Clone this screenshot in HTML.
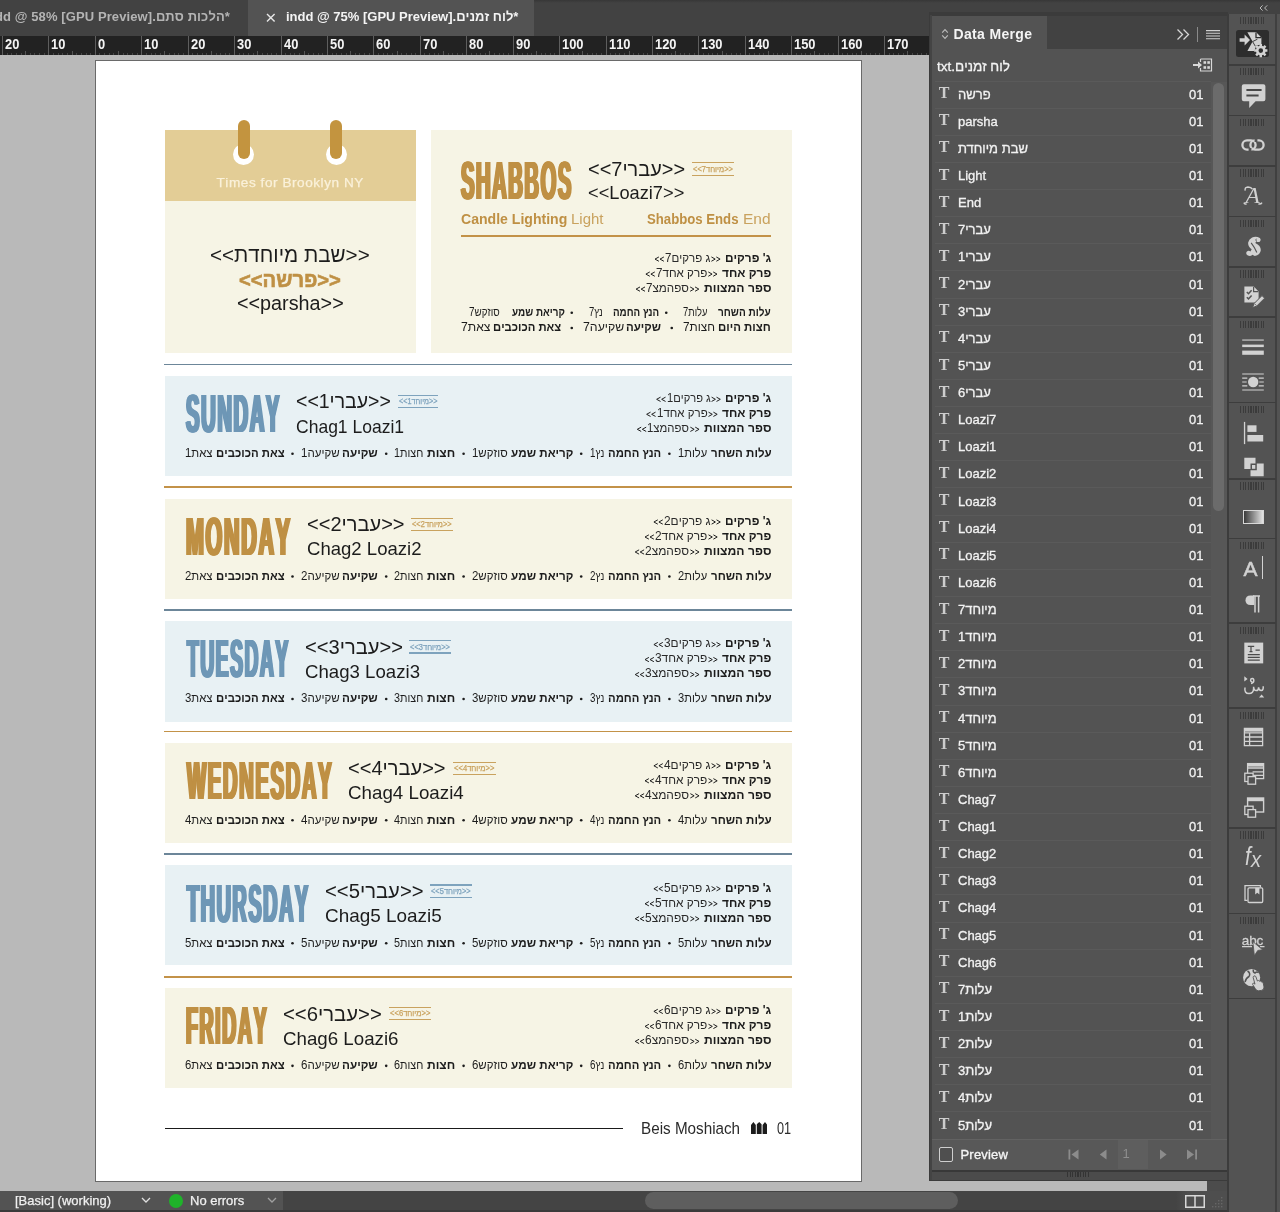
<!DOCTYPE html>
<html lang="en"><head><meta charset="utf-8"><title>InDesign</title>
<style>
*{box-sizing:border-box;margin:0;padding:0}
html,body{width:1280px;height:1212px;overflow:hidden;font-family:"Liberation Sans",sans-serif}
body{position:relative;background:#b9b9b9;font-family:"Liberation Sans",sans-serif;font-size:13px;color:#000}
.a{position:absolute}
.t{position:absolute;white-space:nowrap;line-height:1;font-kerning:none}
/* top tab bar */
#tabbar{left:0;top:0;width:1280px;height:36px;background:#424242}
#tabbar .topline{left:0;top:0;width:1280px;height:3px;background:linear-gradient(#373737,#424242)}
#tab1{left:0;top:0;width:248px;height:36px;background:#424242}
#tab2{left:248px;top:0;width:286px;height:36px;background:#535353}
.tabtxt{font-weight:bold;font-size:13px;top:10px}
/* ruler */
#ruler{left:0;top:36px;width:930px;height:19px;background:#222;overflow:hidden}
#ruler .mj{position:absolute;top:0;width:1px;height:19px;background:#5e5e5e}
#ruler .md{position:absolute;top:15px;width:1px;height:4px;background:#545454}
#ruler .mn{position:absolute;top:17px;width:1px;height:2px;background:#474747}
#ruler .n{position:absolute;top:0.7px;font-size:14px;line-height:1;color:#f4f4f4;font-weight:bold;transform:scaleX(.92);transform-origin:0 0;font-kerning:none}
/* page */
#page{left:95px;top:60px;width:767px;height:1122px;background:#fff;border:1px solid #6a6a6a}
/* status */
#status{left:0;top:1191px;width:1280px;height:21px;background:#444}
/* data merge panel */
#pshadow{left:929px;top:12px;width:299px;height:1169px;background:#3b3b3b}
#panel{left:930px;top:15px;width:297px;height:1165px;background:#535353;overflow:hidden}
#phead{left:0;top:0;width:297px;height:34px;background:#424242}
#ptab{left:0;top:0;width:117px;height:34px;background:#535353}
.row{position:absolute;left:5px;width:276px;height:1px;background:#5a5a5a}
.rT{position:absolute;left:8.8px;font-family:"Liberation Serif",serif;font-size:16px;line-height:1;color:#cdcdcd;font-weight:bold}
.rN{position:absolute;left:28px;font-size:13px;line-height:1;color:#f2f2f2;white-space:nowrap;-webkit-text-stroke:0.3px #f2f2f2}
.rV{position:absolute;left:259px;font-size:13px;line-height:1;color:#f2f2f2;-webkit-text-stroke:0.3px #f2f2f2}

#root{position:absolute;left:0;top:0;width:1280px;height:1212px;will-change:transform}

</style></head>
<body>
<div id="root">
<div class="a" id="tabbar"><div class="a topline"></div></div>
<div class="a" id="tab1"></div><div class="a" id="tab2"></div>
<div class="t tabtxt" style="right:1050px;color:#b4b4b4;letter-spacing:0.1px">InDesign.indd @ 58% [GPU Preview].הלכות סתם*</div>
<svg class="a" style="left:265.5px;top:13px" width="10" height="10" viewBox="0 0 10 10"><path d="M1 1 L8.6 8.6 M8.6 1 L1 8.6" stroke="#e8e8e8" stroke-width="1.4" fill="none"/></svg>
<div class="t tabtxt" style="left:286px;color:#f4f4f4">indd @ 75% [GPU Preview].לוח זמנים*</div>
<div class="a" id="ruler"><i class="mj" style="left:2px"></i><span class="n" style="left:5px">20</span><i class="mn" style="left:7px"></i><i class="mn" style="left:11px"></i><i class="mn" style="left:16px"></i><i class="mn" style="left:21px"></i><i class="md" style="left:25px"></i><i class="mn" style="left:30px"></i><i class="mn" style="left:34px"></i><i class="mn" style="left:39px"></i><i class="mn" style="left:44px"></i><i class="mj" style="left:48px"></i><span class="n" style="left:51px">10</span><i class="mn" style="left:53px"></i><i class="mn" style="left:58px"></i><i class="mn" style="left:62px"></i><i class="mn" style="left:67px"></i><i class="md" style="left:72px"></i><i class="mn" style="left:76px"></i><i class="mn" style="left:81px"></i><i class="mn" style="left:86px"></i><i class="mn" style="left:90px"></i><i class="mj" style="left:95px"></i><span class="n" style="left:98px">0</span><i class="mn" style="left:99px"></i><i class="mn" style="left:104px"></i><i class="mn" style="left:109px"></i><i class="mn" style="left:113px"></i><i class="md" style="left:118px"></i><i class="mn" style="left:123px"></i><i class="mn" style="left:127px"></i><i class="mn" style="left:132px"></i><i class="mn" style="left:137px"></i><i class="mj" style="left:141px"></i><span class="n" style="left:144px">10</span><i class="mn" style="left:146px"></i><i class="mn" style="left:151px"></i><i class="mn" style="left:155px"></i><i class="mn" style="left:160px"></i><i class="md" style="left:164px"></i><i class="mn" style="left:169px"></i><i class="mn" style="left:174px"></i><i class="mn" style="left:178px"></i><i class="mn" style="left:183px"></i><i class="mj" style="left:188px"></i><span class="n" style="left:191px">20</span><i class="mn" style="left:192px"></i><i class="mn" style="left:197px"></i><i class="mn" style="left:202px"></i><i class="mn" style="left:206px"></i><i class="md" style="left:211px"></i><i class="mn" style="left:216px"></i><i class="mn" style="left:220px"></i><i class="mn" style="left:225px"></i><i class="mn" style="left:229px"></i><i class="mj" style="left:234px"></i><span class="n" style="left:237px">30</span><i class="mn" style="left:239px"></i><i class="mn" style="left:243px"></i><i class="mn" style="left:248px"></i><i class="mn" style="left:253px"></i><i class="md" style="left:257px"></i><i class="mn" style="left:262px"></i><i class="mn" style="left:267px"></i><i class="mn" style="left:271px"></i><i class="mn" style="left:276px"></i><i class="mj" style="left:281px"></i><span class="n" style="left:284px">40</span><i class="mn" style="left:285px"></i><i class="mn" style="left:290px"></i><i class="mn" style="left:294px"></i><i class="mn" style="left:299px"></i><i class="md" style="left:304px"></i><i class="mn" style="left:308px"></i><i class="mn" style="left:313px"></i><i class="mn" style="left:318px"></i><i class="mn" style="left:322px"></i><i class="mj" style="left:327px"></i><span class="n" style="left:330px">50</span><i class="mn" style="left:332px"></i><i class="mn" style="left:336px"></i><i class="mn" style="left:341px"></i><i class="mn" style="left:346px"></i><i class="md" style="left:350px"></i><i class="mn" style="left:355px"></i><i class="mn" style="left:359px"></i><i class="mn" style="left:364px"></i><i class="mn" style="left:369px"></i><i class="mj" style="left:373px"></i><span class="n" style="left:376px">60</span><i class="mn" style="left:378px"></i><i class="mn" style="left:383px"></i><i class="mn" style="left:387px"></i><i class="mn" style="left:392px"></i><i class="md" style="left:397px"></i><i class="mn" style="left:401px"></i><i class="mn" style="left:406px"></i><i class="mn" style="left:411px"></i><i class="mn" style="left:415px"></i><i class="mj" style="left:420px"></i><span class="n" style="left:423px">70</span><i class="mn" style="left:424px"></i><i class="mn" style="left:429px"></i><i class="mn" style="left:434px"></i><i class="mn" style="left:438px"></i><i class="md" style="left:443px"></i><i class="mn" style="left:448px"></i><i class="mn" style="left:452px"></i><i class="mn" style="left:457px"></i><i class="mn" style="left:462px"></i><i class="mj" style="left:466px"></i><span class="n" style="left:469px">80</span><i class="mn" style="left:471px"></i><i class="mn" style="left:476px"></i><i class="mn" style="left:480px"></i><i class="mn" style="left:485px"></i><i class="md" style="left:489px"></i><i class="mn" style="left:494px"></i><i class="mn" style="left:499px"></i><i class="mn" style="left:503px"></i><i class="mn" style="left:508px"></i><i class="mj" style="left:513px"></i><span class="n" style="left:516px">90</span><i class="mn" style="left:517px"></i><i class="mn" style="left:522px"></i><i class="mn" style="left:527px"></i><i class="mn" style="left:531px"></i><i class="md" style="left:536px"></i><i class="mn" style="left:541px"></i><i class="mn" style="left:545px"></i><i class="mn" style="left:550px"></i><i class="mn" style="left:554px"></i><i class="mj" style="left:559px"></i><span class="n" style="left:562px">100</span><i class="mn" style="left:564px"></i><i class="mn" style="left:568px"></i><i class="mn" style="left:573px"></i><i class="mn" style="left:578px"></i><i class="md" style="left:582px"></i><i class="mn" style="left:587px"></i><i class="mn" style="left:592px"></i><i class="mn" style="left:596px"></i><i class="mn" style="left:601px"></i><i class="mj" style="left:606px"></i><span class="n" style="left:609px">110</span><i class="mn" style="left:610px"></i><i class="mn" style="left:615px"></i><i class="mn" style="left:619px"></i><i class="mn" style="left:624px"></i><i class="md" style="left:629px"></i><i class="mn" style="left:633px"></i><i class="mn" style="left:638px"></i><i class="mn" style="left:643px"></i><i class="mn" style="left:647px"></i><i class="mj" style="left:652px"></i><span class="n" style="left:655px">120</span><i class="mn" style="left:657px"></i><i class="mn" style="left:661px"></i><i class="mn" style="left:666px"></i><i class="mn" style="left:671px"></i><i class="md" style="left:675px"></i><i class="mn" style="left:680px"></i><i class="mn" style="left:684px"></i><i class="mn" style="left:689px"></i><i class="mn" style="left:694px"></i><i class="mj" style="left:698px"></i><span class="n" style="left:701px">130</span><i class="mn" style="left:703px"></i><i class="mn" style="left:708px"></i><i class="mn" style="left:712px"></i><i class="mn" style="left:717px"></i><i class="md" style="left:722px"></i><i class="mn" style="left:726px"></i><i class="mn" style="left:731px"></i><i class="mn" style="left:736px"></i><i class="mn" style="left:740px"></i><i class="mj" style="left:745px"></i><span class="n" style="left:748px">140</span><i class="mn" style="left:749px"></i><i class="mn" style="left:754px"></i><i class="mn" style="left:759px"></i><i class="mn" style="left:763px"></i><i class="md" style="left:768px"></i><i class="mn" style="left:773px"></i><i class="mn" style="left:777px"></i><i class="mn" style="left:782px"></i><i class="mn" style="left:787px"></i><i class="mj" style="left:791px"></i><span class="n" style="left:794px">150</span><i class="mn" style="left:796px"></i><i class="mn" style="left:801px"></i><i class="mn" style="left:805px"></i><i class="mn" style="left:810px"></i><i class="md" style="left:814px"></i><i class="mn" style="left:819px"></i><i class="mn" style="left:824px"></i><i class="mn" style="left:828px"></i><i class="mn" style="left:833px"></i><i class="mj" style="left:838px"></i><span class="n" style="left:841px">160</span><i class="mn" style="left:842px"></i><i class="mn" style="left:847px"></i><i class="mn" style="left:852px"></i><i class="mn" style="left:856px"></i><i class="md" style="left:861px"></i><i class="mn" style="left:866px"></i><i class="mn" style="left:870px"></i><i class="mn" style="left:875px"></i><i class="mn" style="left:879px"></i><i class="mj" style="left:884px"></i><span class="n" style="left:887px">170</span><i class="mn" style="left:889px"></i><i class="mn" style="left:893px"></i><i class="mn" style="left:898px"></i><i class="mn" style="left:903px"></i><i class="md" style="left:907px"></i><i class="mn" style="left:912px"></i><i class="mn" style="left:917px"></i><i class="mn" style="left:921px"></i><i class="mn" style="left:926px"></i><i class="mj" style="left:931px"></i><span class="n" style="left:934px">180</span></div>
<div class="a" id="page"></div>
<div class="a" id="status"></div>
<div class="a" style="left:0;top:1191px;width:283px;height:21px;background:#535353"></div>
<div class="a" style="left:0;top:1210px;width:1280px;height:2px;background:#3a3a3a"></div>
<div class="t" style="left:15px;top:1194px;font-size:13px;color:#f0f0f0;-webkit-text-stroke:0.25px #f0f0f0">[Basic] (working)</div>
<svg class="a" style="left:141px;top:1197px" width="10" height="7" viewBox="0 0 10 7"><path d="M1 1 L5 5 L9 1" stroke="#e0e0e0" stroke-width="1.3" fill="none"/></svg>
<div class="a" style="left:169px;top:1194px;width:14px;height:14px;border-radius:7px;background:#1fb32a"></div>
<div class="t" style="left:190px;top:1194px;font-size:13px;color:#f0f0f0;-webkit-text-stroke:0.25px #f0f0f0">No errors</div>
<svg class="a" style="left:267px;top:1197px" width="10" height="7" viewBox="0 0 10 7"><path d="M1 1 L5 5 L9 1" stroke="#a0a0a0" stroke-width="1.3" fill="none"/></svg>
<div class="a" style="left:645px;top:1192px;width:313px;height:17px;border-radius:8.5px;background:#5e5e5e"></div>
<svg class="a" style="left:1185px;top:1195px" width="20" height="13" viewBox="0 0 20 13"><rect x="0.75" y="0.75" width="18.5" height="11.5" fill="none" stroke="#d8d8d8" stroke-width="1.5"/><path d="M10 0 V13" stroke="#d8d8d8" stroke-width="1.5"/></svg>
<div class="a" style="left:1176px;top:1191px;width:52px;height:19px;background:linear-gradient(90deg,#444,#4e4e4e 12px)"></div>
<svg class="a" style="left:1185px;top:1195px" width="20" height="13" viewBox="0 0 20 13"><rect x="0.75" y="0.75" width="18.5" height="11.5" fill="none" stroke="#d8d8d8" stroke-width="1.5"/><path d="M10 0 V13" stroke="#d8d8d8" stroke-width="1.5"/></svg>
<svg class="a" style="left:1209px;top:1194px" width="16" height="15" viewBox="0 0 16 15"><g fill="#666"><rect x="12" y="3" width="1.4" height="1.4"/><rect x="9" y="6" width="1.4" height="1.4"/><rect x="12" y="6" width="1.4" height="1.4"/><rect x="6" y="9" width="1.4" height="1.4"/><rect x="9" y="9" width="1.4" height="1.4"/><rect x="12" y="9" width="1.4" height="1.4"/><rect x="3" y="12" width="1.4" height="1.4"/><rect x="6" y="12" width="1.4" height="1.4"/><rect x="9" y="12" width="1.4" height="1.4"/><rect x="12" y="12" width="1.4" height="1.4"/></g></svg>
<div class="a" style="left:164.50px;top:130.00px;width:251.50px;height:223.00px;background:#f6f4e5;"></div>
<div class="a" style="left:164.50px;top:130.00px;width:251.50px;height:70.70px;background:#e3cd96;"></div>
<div class="a" style="left:233.10px;top:143.80px;width:21.2px;height:21.2px;border-radius:50%;background:#fff"></div>
<div class="a" style="left:237.70px;top:120.2px;width:12px;height:39px;border-radius:6px;background:#c3943f"></div>
<div class="a" style="left:325.80px;top:143.80px;width:21.2px;height:21.2px;border-radius:50%;background:#fff"></div>
<div class="a" style="left:330.40px;top:120.2px;width:12px;height:39px;border-radius:6px;background:#c3943f"></div>
<div class="t" style="left:216.50px;top:175.89px;font-size:13.60px;color:#faf1da;letter-spacing:0.546px;-webkit-text-stroke:0.25px #faf1da;">Times for Brooklyn NY</div>
<div class="t" style="left:209.80px;top:243.92px;font-size:21.00px;color:#1c1c1c;transform-origin:0 0;transform:scaleX(0.9822);">&lt;&lt;שבת מיוחדת&gt;&gt;</div>
<div class="t" style="left:238.70px;top:268.52px;font-size:21.00px;color:#bf9044;transform-origin:0 0;transform:scaleX(0.9618);font-weight:bold;-webkit-text-stroke:0.6px #bf9044;">&lt;&lt;פרשה&gt;&gt;</div>
<div class="t" style="left:236.80px;top:292.57px;font-size:20.00px;color:#1c1c1c;transform-origin:0 0;transform:scaleX(0.9891);">&lt;&lt;parsha&gt;&gt;</div>
<div class="a" style="left:430.60px;top:130.00px;width:361.40px;height:223.00px;background:#f6f4e5;"></div>
<div class="t" style="left:460.98px;top:154.01px;font-size:53.97px;font-weight:bold;letter-spacing:4.20px;color:#bf9044;transform-origin:0 0;transform:scaleX(0.3736);text-shadow:1.55px 0 0 #bf9044,-1.55px 0 0 #bf9044,3.10px 0 0 #bf9044,-3.10px 0 0 #bf9044;">SHABBOS</div>
<div class="t" style="left:588.00px;top:158.65px;font-size:20.50px;color:#1c1c1c;transform-origin:0 0;transform:scaleX(0.9724);">&lt;&lt;עברי7&gt;&gt;</div>
<div class="t" style="left:588.00px;top:184.04px;font-size:18.50px;color:#1c1c1c;transform-origin:0 0;transform:scaleX(0.9854);">&lt;&lt;Loazi7&gt;&gt;</div>
<div class="a" style="left:691.70px;top:162.20px;width:42.00px;height:1.10px;background:#c9a25e;"></div>
<div class="a" style="left:691.70px;top:174.70px;width:42.00px;height:1.10px;background:#c9a25e;"></div>
<div class="t" style="left:692.70px;top:164.64px;font-size:8.40px;color:#c9a25e;transform-origin:0 0;transform:scaleX(0.8966);-webkit-text-stroke:0.25px #c9a25e;">&lt;&lt;מיוחד7&gt;&gt;</div>
<div class="t" style="left:460.60px;top:211.95px;font-size:14.00px;color:#bf9044;transform-origin:0 0;transform:scaleX(1.0051);font-weight:bold;">Candle Lighting</div>
<div class="t" style="left:571.00px;top:211.95px;font-size:14.00px;color:#c9a25e;transform-origin:0 0;transform:scaleX(1.0705);">Light</div>
<div class="t" style="left:647.00px;top:211.95px;font-size:14.00px;color:#bf9044;transform-origin:0 0;transform:scaleX(0.9410);font-weight:bold;">Shabbos Ends</div>
<div class="t" style="left:743.00px;top:211.95px;font-size:14.00px;color:#c9a25e;transform-origin:0 0;transform:scaleX(1.1080);">End</div>
<div class="a" style="left:460.60px;top:235.00px;width:310.40px;height:1.70px;background:#c39248;"></div>
<div class="t" style="left:725.00px;top:251.97px;font-size:12.20px;color:#1c1c1c;transform-origin:0 0;transform:scaleX(0.9724);font-weight:bold;direction:rtl;">ג' פרקים</div>
<div class="t" style="left:664.90px;top:251.97px;font-size:12.20px;color:#2a2a2a;transform-origin:0 0;transform:scaleX(0.9451);direction:rtl;">ג פרקים7</div>
<div class="t" style="left:721.90px;top:266.97px;font-size:12.20px;color:#1c1c1c;transform-origin:0 0;transform:scaleX(0.9809);font-weight:bold;direction:rtl;">פרק אחד</div>
<div class="t" style="left:655.80px;top:266.97px;font-size:12.20px;color:#2a2a2a;transform-origin:0 0;transform:scaleX(0.9539);direction:rtl;">פרק אחד7</div>
<div class="t" style="left:703.75px;top:281.97px;font-size:12.20px;color:#1c1c1c;transform-origin:0 0;transform:scaleX(0.9994);font-weight:bold;direction:rtl;">ספר המצוות</div>
<div class="t" style="left:646.00px;top:281.97px;font-size:12.20px;color:#2a2a2a;transform-origin:0 0;transform:scaleX(0.9547);direction:rtl;">ספהמצ7</div>
<div class="t" style="left:718.00px;top:306.17px;font-size:12.20px;color:#1c1c1c;transform-origin:0 0;transform:scaleX(0.8252);font-weight:bold;direction:rtl;">עלות השחר</div>
<div class="t" style="left:683.00px;top:306.17px;font-size:12.20px;color:#1c1c1c;transform-origin:0 0;transform:scaleX(0.7669);direction:rtl;">עלות7</div>
<div class="t" style="left:613.00px;top:306.17px;font-size:12.20px;color:#1c1c1c;transform-origin:0 0;transform:scaleX(0.8043);font-weight:bold;direction:rtl;">הנץ החמה</div>
<div class="t" style="left:588.75px;top:306.17px;font-size:12.20px;color:#1c1c1c;transform-origin:0 0;transform:scaleX(0.7777);direction:rtl;">נץ7</div>
<div class="t" style="left:512.00px;top:306.17px;font-size:12.20px;color:#1c1c1c;transform-origin:0 0;transform:scaleX(0.8107);font-weight:bold;direction:rtl;">קריאת שמע</div>
<div class="t" style="left:469.25px;top:306.17px;font-size:12.20px;color:#1c1c1c;transform-origin:0 0;transform:scaleX(0.8092);direction:rtl;">סוזקש7</div>
<div class="t" style="left:718.00px;top:321.47px;font-size:12.20px;color:#1c1c1c;transform-origin:0 0;transform:scaleX(0.9396);font-weight:bold;direction:rtl;">חצות היום</div>
<div class="t" style="left:683.00px;top:321.47px;font-size:12.20px;color:#1c1c1c;transform-origin:0 0;transform:scaleX(0.9679);direction:rtl;">חצות7</div>
<div class="t" style="left:626.25px;top:321.47px;font-size:12.20px;color:#1c1c1c;transform-origin:0 0;transform:scaleX(0.9392);font-weight:bold;direction:rtl;">שקיעה</div>
<div class="t" style="left:582.50px;top:321.47px;font-size:12.20px;color:#1c1c1c;transform-origin:0 0;transform:scaleX(1.0088);direction:rtl;">שקיעה7</div>
<div class="t" style="left:493.00px;top:321.47px;font-size:12.20px;color:#1c1c1c;transform-origin:0 0;transform:scaleX(0.9273);font-weight:bold;direction:rtl;">צאת הכוכבים</div>
<div class="t" style="left:460.50px;top:321.47px;font-size:12.20px;color:#1c1c1c;transform-origin:0 0;transform:scaleX(0.9992);direction:rtl;">צאת7</div>
<div class="a" style="left:164.30px;top:363.70px;width:627.70px;height:1.80px;background:#6c8699;"></div>
<div class="a" style="left:164.50px;top:375.90px;width:627.50px;height:100.20px;background:#e8f1f4;"></div>
<div class="t" style="left:186.38px;top:387.13px;font-size:53.83px;font-weight:bold;letter-spacing:4.20px;color:#6e97b6;transform-origin:0 0;transform:scaleX(0.3764);text-shadow:1.55px 0 0 #6e97b6,-1.55px 0 0 #6e97b6,3.10px 0 0 #6e97b6,-3.10px 0 0 #6e97b6;">SUNDAY</div>
<div class="t" style="left:296.40px;top:391.45px;font-size:20.50px;color:#1c1c1c;transform-origin:0 0;transform:scaleX(0.9508);">&lt;&lt;עברי1&gt;&gt;</div>
<div class="a" style="left:397.50px;top:395.00px;width:40.50px;height:1.10px;background:#7ea3bd;"></div>
<div class="a" style="left:397.50px;top:407.20px;width:40.50px;height:1.10px;background:#7ea3bd;"></div>
<div class="t" style="left:398.50px;top:397.29px;font-size:8.40px;color:#7ea3bd;transform-origin:0 0;transform:scaleX(0.8630);-webkit-text-stroke:0.25px #7ea3bd;">&lt;&lt;מיוחד1&gt;&gt;</div>
<div class="t" style="left:296.40px;top:416.52px;font-size:19.00px;color:#1c1c1c;transform-origin:0 0;transform:scaleX(0.9219);">Chag1 Loazi1</div>
<div class="t" style="left:725.00px;top:392.17px;font-size:12.20px;color:#1c1c1c;transform-origin:0 0;transform:scaleX(0.9724);font-weight:bold;direction:rtl;">ג' פרקים</div>
<div class="t" style="left:666.55px;top:392.17px;font-size:12.20px;color:#2a2a2a;transform-origin:0 0;transform:scaleX(0.9149);direction:rtl;">ג פרקים1</div>
<div class="t" style="left:721.90px;top:407.17px;font-size:12.20px;color:#1c1c1c;transform-origin:0 0;transform:scaleX(0.9809);font-weight:bold;direction:rtl;">פרק אחד</div>
<div class="t" style="left:656.55px;top:407.17px;font-size:12.20px;color:#2a2a2a;transform-origin:0 0;transform:scaleX(0.9437);direction:rtl;">פרק אחד1</div>
<div class="t" style="left:703.75px;top:422.17px;font-size:12.20px;color:#1c1c1c;transform-origin:0 0;transform:scaleX(0.9994);font-weight:bold;direction:rtl;">ספר המצוות</div>
<div class="t" style="left:647.20px;top:422.17px;font-size:12.20px;color:#2a2a2a;transform-origin:0 0;transform:scaleX(0.9325);direction:rtl;">ספהמצ1</div>
<div class="t" style="left:710.50px;top:447.17px;font-size:12.20px;color:#1c1c1c;transform-origin:0 0;transform:scaleX(0.9494);font-weight:bold;direction:rtl;">עלות השחר</div>
<div class="t" style="left:678.25px;top:447.17px;font-size:12.20px;color:#1c1c1c;transform-origin:0 0;transform:scaleX(0.9156);direction:rtl;">עלות1</div>
<div class="t" style="left:608.00px;top:447.17px;font-size:12.20px;color:#1c1c1c;transform-origin:0 0;transform:scaleX(0.9260);font-weight:bold;direction:rtl;">הנץ החמה</div>
<div class="t" style="left:590.00px;top:447.17px;font-size:12.20px;color:#1c1c1c;transform-origin:0 0;transform:scaleX(0.8060);direction:rtl;">נץ1</div>
<div class="t" style="left:511.25px;top:447.17px;font-size:12.20px;color:#1c1c1c;transform-origin:0 0;transform:scaleX(0.9560);font-weight:bold;direction:rtl;">קריאת שמע</div>
<div class="t" style="left:471.80px;top:447.17px;font-size:12.20px;color:#1c1c1c;transform-origin:0 0;transform:scaleX(0.9395);direction:rtl;">סוזקש1</div>
<div class="t" style="left:427.20px;top:447.17px;font-size:12.20px;color:#1c1c1c;transform-origin:0 0;transform:scaleX(0.9926);font-weight:bold;direction:rtl;">חצות</div>
<div class="t" style="left:394.40px;top:447.17px;font-size:12.20px;color:#1c1c1c;transform-origin:0 0;transform:scaleX(0.8862);direction:rtl;">חצות1</div>
<div class="t" style="left:342.20px;top:447.17px;font-size:12.20px;color:#1c1c1c;transform-origin:0 0;transform:scaleX(0.9606);font-weight:bold;direction:rtl;">שקיעה</div>
<div class="t" style="left:300.70px;top:447.17px;font-size:12.20px;color:#1c1c1c;transform-origin:0 0;transform:scaleX(0.9465);direction:rtl;">שקיעה1</div>
<div class="t" style="left:215.60px;top:447.17px;font-size:12.20px;color:#1c1c1c;transform-origin:0 0;transform:scaleX(0.9334);font-weight:bold;direction:rtl;">צאת הכוכבים</div>
<div class="t" style="left:185.20px;top:447.17px;font-size:12.20px;color:#1c1c1c;transform-origin:0 0;transform:scaleX(0.9349);direction:rtl;">צאת1</div>
<div class="a" style="left:164.30px;top:486.40px;width:627.70px;height:1.80px;background:#c39248;"></div>
<div class="a" style="left:164.50px;top:498.60px;width:627.50px;height:100.20px;background:#f6f4e5;"></div>
<div class="t" style="left:185.60px;top:509.83px;font-size:53.83px;font-weight:bold;letter-spacing:4.20px;color:#bf9044;transform-origin:0 0;transform:scaleX(0.3997);text-shadow:1.55px 0 0 #bf9044,-1.55px 0 0 #bf9044,3.10px 0 0 #bf9044,-3.10px 0 0 #bf9044;">MONDAY</div>
<div class="t" style="left:306.75px;top:514.15px;font-size:20.50px;color:#1c1c1c;transform-origin:0 0;transform:scaleX(0.9774);">&lt;&lt;עברי2&gt;&gt;</div>
<div class="a" style="left:411.25px;top:517.70px;width:41.75px;height:1.10px;background:#c9a25e;"></div>
<div class="a" style="left:411.25px;top:529.90px;width:41.75px;height:1.10px;background:#c9a25e;"></div>
<div class="t" style="left:412.25px;top:519.99px;font-size:8.40px;color:#c9a25e;transform-origin:0 0;transform:scaleX(0.8910);-webkit-text-stroke:0.25px #c9a25e;">&lt;&lt;מיוחד2&gt;&gt;</div>
<div class="t" style="left:306.75px;top:539.22px;font-size:19.00px;color:#1c1c1c;transform-origin:0 0;transform:scaleX(0.9765);">Chag2 Loazi2</div>
<div class="t" style="left:725.00px;top:514.87px;font-size:12.20px;color:#1c1c1c;transform-origin:0 0;transform:scaleX(0.9724);font-weight:bold;direction:rtl;">ג' פרקים</div>
<div class="t" style="left:663.80px;top:514.87px;font-size:12.20px;color:#2a2a2a;transform-origin:0 0;transform:scaleX(0.9722);direction:rtl;">ג פרקים2</div>
<div class="t" style="left:721.90px;top:529.87px;font-size:12.20px;color:#1c1c1c;transform-origin:0 0;transform:scaleX(0.9809);font-weight:bold;direction:rtl;">פרק אחד</div>
<div class="t" style="left:654.90px;top:529.87px;font-size:12.20px;color:#2a2a2a;transform-origin:0 0;transform:scaleX(0.9743);direction:rtl;">פרק אחד2</div>
<div class="t" style="left:703.75px;top:544.87px;font-size:12.20px;color:#1c1c1c;transform-origin:0 0;transform:scaleX(0.9994);font-weight:bold;direction:rtl;">ספר המצוות</div>
<div class="t" style="left:645.10px;top:544.87px;font-size:12.20px;color:#2a2a2a;transform-origin:0 0;transform:scaleX(0.9792);direction:rtl;">ספהמצ2</div>
<div class="t" style="left:710.50px;top:569.87px;font-size:12.20px;color:#1c1c1c;transform-origin:0 0;transform:scaleX(0.9494);font-weight:bold;direction:rtl;">עלות השחר</div>
<div class="t" style="left:678.25px;top:569.87px;font-size:12.20px;color:#1c1c1c;transform-origin:0 0;transform:scaleX(0.9156);direction:rtl;">עלות2</div>
<div class="t" style="left:608.00px;top:569.87px;font-size:12.20px;color:#1c1c1c;transform-origin:0 0;transform:scaleX(0.9260);font-weight:bold;direction:rtl;">הנץ החמה</div>
<div class="t" style="left:590.00px;top:569.87px;font-size:12.20px;color:#1c1c1c;transform-origin:0 0;transform:scaleX(0.8060);direction:rtl;">נץ2</div>
<div class="t" style="left:511.25px;top:569.87px;font-size:12.20px;color:#1c1c1c;transform-origin:0 0;transform:scaleX(0.9560);font-weight:bold;direction:rtl;">קריאת שמע</div>
<div class="t" style="left:471.80px;top:569.87px;font-size:12.20px;color:#1c1c1c;transform-origin:0 0;transform:scaleX(0.9395);direction:rtl;">סוזקש2</div>
<div class="t" style="left:427.20px;top:569.87px;font-size:12.20px;color:#1c1c1c;transform-origin:0 0;transform:scaleX(0.9926);font-weight:bold;direction:rtl;">חצות</div>
<div class="t" style="left:394.40px;top:569.87px;font-size:12.20px;color:#1c1c1c;transform-origin:0 0;transform:scaleX(0.8862);direction:rtl;">חצות2</div>
<div class="t" style="left:342.20px;top:569.87px;font-size:12.20px;color:#1c1c1c;transform-origin:0 0;transform:scaleX(0.9606);font-weight:bold;direction:rtl;">שקיעה</div>
<div class="t" style="left:300.70px;top:569.87px;font-size:12.20px;color:#1c1c1c;transform-origin:0 0;transform:scaleX(0.9465);direction:rtl;">שקיעה2</div>
<div class="t" style="left:215.60px;top:569.87px;font-size:12.20px;color:#1c1c1c;transform-origin:0 0;transform:scaleX(0.9334);font-weight:bold;direction:rtl;">צאת הכוכבים</div>
<div class="t" style="left:185.20px;top:569.87px;font-size:12.20px;color:#1c1c1c;transform-origin:0 0;transform:scaleX(0.9349);direction:rtl;">צאת2</div>
<div class="a" style="left:164.30px;top:609.20px;width:627.70px;height:1.80px;background:#6c8699;"></div>
<div class="a" style="left:164.50px;top:621.40px;width:627.50px;height:100.20px;background:#e8f1f4;"></div>
<div class="t" style="left:186.69px;top:632.38px;font-size:53.83px;font-weight:bold;letter-spacing:4.20px;color:#6e97b6;transform-origin:0 0;transform:scaleX(0.3585);text-shadow:1.55px 0 0 #6e97b6,-1.55px 0 0 #6e97b6,3.10px 0 0 #6e97b6,-3.10px 0 0 #6e97b6;">TUESDAY</div>
<div class="t" style="left:304.50px;top:636.70px;font-size:20.50px;color:#1c1c1c;transform-origin:0 0;transform:scaleX(0.9824);">&lt;&lt;עברי3&gt;&gt;</div>
<div class="a" style="left:408.75px;top:640.25px;width:42.00px;height:1.10px;background:#7ea3bd;"></div>
<div class="a" style="left:408.75px;top:652.45px;width:42.00px;height:1.10px;background:#7ea3bd;"></div>
<div class="t" style="left:409.75px;top:642.54px;font-size:8.40px;color:#7ea3bd;transform-origin:0 0;transform:scaleX(0.8966);-webkit-text-stroke:0.25px #7ea3bd;">&lt;&lt;מיוחד3&gt;&gt;</div>
<div class="t" style="left:304.50px;top:661.77px;font-size:19.00px;color:#1c1c1c;transform-origin:0 0;transform:scaleX(0.9808);">Chag3 Loazi3</div>
<div class="t" style="left:725.00px;top:637.42px;font-size:12.20px;color:#1c1c1c;transform-origin:0 0;transform:scaleX(0.9724);font-weight:bold;direction:rtl;">ג' פרקים</div>
<div class="t" style="left:663.80px;top:637.42px;font-size:12.20px;color:#2a2a2a;transform-origin:0 0;transform:scaleX(0.9722);direction:rtl;">ג פרקים3</div>
<div class="t" style="left:721.90px;top:652.42px;font-size:12.20px;color:#1c1c1c;transform-origin:0 0;transform:scaleX(0.9809);font-weight:bold;direction:rtl;">פרק אחד</div>
<div class="t" style="left:654.90px;top:652.42px;font-size:12.20px;color:#2a2a2a;transform-origin:0 0;transform:scaleX(0.9743);direction:rtl;">פרק אחד3</div>
<div class="t" style="left:703.75px;top:667.42px;font-size:12.20px;color:#1c1c1c;transform-origin:0 0;transform:scaleX(0.9994);font-weight:bold;direction:rtl;">ספר המצוות</div>
<div class="t" style="left:645.10px;top:667.42px;font-size:12.20px;color:#2a2a2a;transform-origin:0 0;transform:scaleX(0.9792);direction:rtl;">ספהמצ3</div>
<div class="t" style="left:710.50px;top:692.42px;font-size:12.20px;color:#1c1c1c;transform-origin:0 0;transform:scaleX(0.9494);font-weight:bold;direction:rtl;">עלות השחר</div>
<div class="t" style="left:678.25px;top:692.42px;font-size:12.20px;color:#1c1c1c;transform-origin:0 0;transform:scaleX(0.9156);direction:rtl;">עלות3</div>
<div class="t" style="left:608.00px;top:692.42px;font-size:12.20px;color:#1c1c1c;transform-origin:0 0;transform:scaleX(0.9260);font-weight:bold;direction:rtl;">הנץ החמה</div>
<div class="t" style="left:590.00px;top:692.42px;font-size:12.20px;color:#1c1c1c;transform-origin:0 0;transform:scaleX(0.8060);direction:rtl;">נץ3</div>
<div class="t" style="left:511.25px;top:692.42px;font-size:12.20px;color:#1c1c1c;transform-origin:0 0;transform:scaleX(0.9560);font-weight:bold;direction:rtl;">קריאת שמע</div>
<div class="t" style="left:471.80px;top:692.42px;font-size:12.20px;color:#1c1c1c;transform-origin:0 0;transform:scaleX(0.9395);direction:rtl;">סוזקש3</div>
<div class="t" style="left:427.20px;top:692.42px;font-size:12.20px;color:#1c1c1c;transform-origin:0 0;transform:scaleX(0.9926);font-weight:bold;direction:rtl;">חצות</div>
<div class="t" style="left:394.40px;top:692.42px;font-size:12.20px;color:#1c1c1c;transform-origin:0 0;transform:scaleX(0.8862);direction:rtl;">חצות3</div>
<div class="t" style="left:342.20px;top:692.42px;font-size:12.20px;color:#1c1c1c;transform-origin:0 0;transform:scaleX(0.9606);font-weight:bold;direction:rtl;">שקיעה</div>
<div class="t" style="left:300.70px;top:692.42px;font-size:12.20px;color:#1c1c1c;transform-origin:0 0;transform:scaleX(0.9465);direction:rtl;">שקיעה3</div>
<div class="t" style="left:215.60px;top:692.42px;font-size:12.20px;color:#1c1c1c;transform-origin:0 0;transform:scaleX(0.9334);font-weight:bold;direction:rtl;">צאת הכוכבים</div>
<div class="t" style="left:185.20px;top:692.42px;font-size:12.20px;color:#1c1c1c;transform-origin:0 0;transform:scaleX(0.9349);direction:rtl;">צאת3</div>
<div class="a" style="left:164.30px;top:730.70px;width:627.70px;height:1.80px;background:#c39248;"></div>
<div class="a" style="left:164.50px;top:742.90px;width:627.50px;height:100.20px;background:#f6f4e5;"></div>
<div class="t" style="left:186.95px;top:753.63px;font-size:53.83px;font-weight:bold;letter-spacing:4.20px;color:#bf9044;transform-origin:0 0;transform:scaleX(0.3773);text-shadow:1.55px 0 0 #bf9044,-1.55px 0 0 #bf9044,3.10px 0 0 #bf9044,-3.10px 0 0 #bf9044;">WEDNESDAY</div>
<div class="t" style="left:348.00px;top:757.95px;font-size:20.50px;color:#1c1c1c;transform-origin:0 0;transform:scaleX(0.9774);">&lt;&lt;עברי4&gt;&gt;</div>
<div class="a" style="left:453.00px;top:761.50px;width:42.50px;height:1.10px;background:#c9a25e;"></div>
<div class="a" style="left:453.00px;top:773.70px;width:42.50px;height:1.10px;background:#c9a25e;"></div>
<div class="t" style="left:454.00px;top:763.79px;font-size:8.40px;color:#c9a25e;transform-origin:0 0;transform:scaleX(0.9078);-webkit-text-stroke:0.25px #c9a25e;">&lt;&lt;מיוחד4&gt;&gt;</div>
<div class="t" style="left:348.00px;top:783.02px;font-size:19.00px;color:#1c1c1c;transform-origin:0 0;transform:scaleX(0.9872);">Chag4 Loazi4</div>
<div class="t" style="left:725.00px;top:758.67px;font-size:12.20px;color:#1c1c1c;transform-origin:0 0;transform:scaleX(0.9724);font-weight:bold;direction:rtl;">ג' פרקים</div>
<div class="t" style="left:663.80px;top:758.67px;font-size:12.20px;color:#2a2a2a;transform-origin:0 0;transform:scaleX(0.9722);direction:rtl;">ג פרקים4</div>
<div class="t" style="left:721.90px;top:773.67px;font-size:12.20px;color:#1c1c1c;transform-origin:0 0;transform:scaleX(0.9809);font-weight:bold;direction:rtl;">פרק אחד</div>
<div class="t" style="left:654.90px;top:773.67px;font-size:12.20px;color:#2a2a2a;transform-origin:0 0;transform:scaleX(0.9743);direction:rtl;">פרק אחד4</div>
<div class="t" style="left:703.75px;top:788.67px;font-size:12.20px;color:#1c1c1c;transform-origin:0 0;transform:scaleX(0.9994);font-weight:bold;direction:rtl;">ספר המצוות</div>
<div class="t" style="left:645.10px;top:788.67px;font-size:12.20px;color:#2a2a2a;transform-origin:0 0;transform:scaleX(0.9792);direction:rtl;">ספהמצ4</div>
<div class="t" style="left:710.50px;top:813.67px;font-size:12.20px;color:#1c1c1c;transform-origin:0 0;transform:scaleX(0.9494);font-weight:bold;direction:rtl;">עלות השחר</div>
<div class="t" style="left:678.25px;top:813.67px;font-size:12.20px;color:#1c1c1c;transform-origin:0 0;transform:scaleX(0.9156);direction:rtl;">עלות4</div>
<div class="t" style="left:608.00px;top:813.67px;font-size:12.20px;color:#1c1c1c;transform-origin:0 0;transform:scaleX(0.9260);font-weight:bold;direction:rtl;">הנץ החמה</div>
<div class="t" style="left:590.00px;top:813.67px;font-size:12.20px;color:#1c1c1c;transform-origin:0 0;transform:scaleX(0.8060);direction:rtl;">נץ4</div>
<div class="t" style="left:511.25px;top:813.67px;font-size:12.20px;color:#1c1c1c;transform-origin:0 0;transform:scaleX(0.9560);font-weight:bold;direction:rtl;">קריאת שמע</div>
<div class="t" style="left:471.80px;top:813.67px;font-size:12.20px;color:#1c1c1c;transform-origin:0 0;transform:scaleX(0.9395);direction:rtl;">סוזקש4</div>
<div class="t" style="left:427.20px;top:813.67px;font-size:12.20px;color:#1c1c1c;transform-origin:0 0;transform:scaleX(0.9926);font-weight:bold;direction:rtl;">חצות</div>
<div class="t" style="left:394.40px;top:813.67px;font-size:12.20px;color:#1c1c1c;transform-origin:0 0;transform:scaleX(0.8862);direction:rtl;">חצות4</div>
<div class="t" style="left:342.20px;top:813.67px;font-size:12.20px;color:#1c1c1c;transform-origin:0 0;transform:scaleX(0.9606);font-weight:bold;direction:rtl;">שקיעה</div>
<div class="t" style="left:300.70px;top:813.67px;font-size:12.20px;color:#1c1c1c;transform-origin:0 0;transform:scaleX(0.9465);direction:rtl;">שקיעה4</div>
<div class="t" style="left:215.60px;top:813.67px;font-size:12.20px;color:#1c1c1c;transform-origin:0 0;transform:scaleX(0.9334);font-weight:bold;direction:rtl;">צאת הכוכבים</div>
<div class="t" style="left:185.20px;top:813.67px;font-size:12.20px;color:#1c1c1c;transform-origin:0 0;transform:scaleX(0.9349);direction:rtl;">צאת4</div>
<div class="a" style="left:164.30px;top:852.90px;width:627.70px;height:1.80px;background:#6c8699;"></div>
<div class="a" style="left:164.50px;top:865.10px;width:627.50px;height:100.20px;background:#e8f1f4;"></div>
<div class="t" style="left:186.72px;top:876.58px;font-size:53.83px;font-weight:bold;letter-spacing:4.20px;color:#6e97b6;transform-origin:0 0;transform:scaleX(0.3690);text-shadow:1.55px 0 0 #6e97b6,-1.55px 0 0 #6e97b6,3.10px 0 0 #6e97b6,-3.10px 0 0 #6e97b6;">THURSDAY</div>
<div class="t" style="left:324.50px;top:880.90px;font-size:20.50px;color:#1c1c1c;transform-origin:0 0;transform:scaleX(0.9874);">&lt;&lt;עברי5&gt;&gt;</div>
<div class="a" style="left:430.00px;top:884.45px;width:41.75px;height:1.10px;background:#7ea3bd;"></div>
<div class="a" style="left:430.00px;top:896.65px;width:41.75px;height:1.10px;background:#7ea3bd;"></div>
<div class="t" style="left:431.00px;top:886.74px;font-size:8.40px;color:#7ea3bd;transform-origin:0 0;transform:scaleX(0.8910);-webkit-text-stroke:0.25px #7ea3bd;">&lt;&lt;מיוחד5&gt;&gt;</div>
<div class="t" style="left:324.50px;top:905.97px;font-size:19.00px;color:#1c1c1c;transform-origin:0 0;transform:scaleX(0.9957);">Chag5 Loazi5</div>
<div class="t" style="left:725.00px;top:881.62px;font-size:12.20px;color:#1c1c1c;transform-origin:0 0;transform:scaleX(0.9724);font-weight:bold;direction:rtl;">ג' פרקים</div>
<div class="t" style="left:663.80px;top:881.62px;font-size:12.20px;color:#2a2a2a;transform-origin:0 0;transform:scaleX(0.9722);direction:rtl;">ג פרקים5</div>
<div class="t" style="left:721.90px;top:896.62px;font-size:12.20px;color:#1c1c1c;transform-origin:0 0;transform:scaleX(0.9809);font-weight:bold;direction:rtl;">פרק אחד</div>
<div class="t" style="left:654.90px;top:896.62px;font-size:12.20px;color:#2a2a2a;transform-origin:0 0;transform:scaleX(0.9743);direction:rtl;">פרק אחד5</div>
<div class="t" style="left:703.75px;top:911.62px;font-size:12.20px;color:#1c1c1c;transform-origin:0 0;transform:scaleX(0.9994);font-weight:bold;direction:rtl;">ספר המצוות</div>
<div class="t" style="left:645.10px;top:911.62px;font-size:12.20px;color:#2a2a2a;transform-origin:0 0;transform:scaleX(0.9792);direction:rtl;">ספהמצ5</div>
<div class="t" style="left:710.50px;top:936.62px;font-size:12.20px;color:#1c1c1c;transform-origin:0 0;transform:scaleX(0.9494);font-weight:bold;direction:rtl;">עלות השחר</div>
<div class="t" style="left:678.25px;top:936.62px;font-size:12.20px;color:#1c1c1c;transform-origin:0 0;transform:scaleX(0.9156);direction:rtl;">עלות5</div>
<div class="t" style="left:608.00px;top:936.62px;font-size:12.20px;color:#1c1c1c;transform-origin:0 0;transform:scaleX(0.9260);font-weight:bold;direction:rtl;">הנץ החמה</div>
<div class="t" style="left:590.00px;top:936.62px;font-size:12.20px;color:#1c1c1c;transform-origin:0 0;transform:scaleX(0.8060);direction:rtl;">נץ5</div>
<div class="t" style="left:511.25px;top:936.62px;font-size:12.20px;color:#1c1c1c;transform-origin:0 0;transform:scaleX(0.9560);font-weight:bold;direction:rtl;">קריאת שמע</div>
<div class="t" style="left:471.80px;top:936.62px;font-size:12.20px;color:#1c1c1c;transform-origin:0 0;transform:scaleX(0.9395);direction:rtl;">סוזקש5</div>
<div class="t" style="left:427.20px;top:936.62px;font-size:12.20px;color:#1c1c1c;transform-origin:0 0;transform:scaleX(0.9926);font-weight:bold;direction:rtl;">חצות</div>
<div class="t" style="left:394.40px;top:936.62px;font-size:12.20px;color:#1c1c1c;transform-origin:0 0;transform:scaleX(0.8862);direction:rtl;">חצות5</div>
<div class="t" style="left:342.20px;top:936.62px;font-size:12.20px;color:#1c1c1c;transform-origin:0 0;transform:scaleX(0.9606);font-weight:bold;direction:rtl;">שקיעה</div>
<div class="t" style="left:300.70px;top:936.62px;font-size:12.20px;color:#1c1c1c;transform-origin:0 0;transform:scaleX(0.9465);direction:rtl;">שקיעה5</div>
<div class="t" style="left:215.60px;top:936.62px;font-size:12.20px;color:#1c1c1c;transform-origin:0 0;transform:scaleX(0.9334);font-weight:bold;direction:rtl;">צאת הכוכבים</div>
<div class="t" style="left:185.20px;top:936.62px;font-size:12.20px;color:#1c1c1c;transform-origin:0 0;transform:scaleX(0.9349);direction:rtl;">צאת5</div>
<div class="a" style="left:164.30px;top:976.00px;width:627.70px;height:1.80px;background:#c39248;"></div>
<div class="a" style="left:164.50px;top:988.20px;width:627.50px;height:100.20px;background:#f6f4e5;"></div>
<div class="t" style="left:185.62px;top:999.23px;font-size:53.83px;font-weight:bold;letter-spacing:4.20px;color:#bf9044;transform-origin:0 0;transform:scaleX(0.3640);text-shadow:1.55px 0 0 #bf9044,-1.55px 0 0 #bf9044,3.10px 0 0 #bf9044,-3.10px 0 0 #bf9044;">FRIDAY</div>
<div class="t" style="left:283.25px;top:1003.55px;font-size:20.50px;color:#1c1c1c;transform-origin:0 0;transform:scaleX(0.9899);">&lt;&lt;עברי6&gt;&gt;</div>
<div class="a" style="left:388.75px;top:1007.10px;width:42.50px;height:1.10px;background:#c9a25e;"></div>
<div class="a" style="left:388.75px;top:1019.30px;width:42.50px;height:1.10px;background:#c9a25e;"></div>
<div class="t" style="left:389.75px;top:1009.39px;font-size:8.40px;color:#c9a25e;transform-origin:0 0;transform:scaleX(0.9078);-webkit-text-stroke:0.25px #c9a25e;">&lt;&lt;מיוחד6&gt;&gt;</div>
<div class="t" style="left:283.25px;top:1028.62px;font-size:19.00px;color:#1c1c1c;transform-origin:0 0;transform:scaleX(0.9850);">Chag6 Loazi6</div>
<div class="t" style="left:725.00px;top:1004.27px;font-size:12.20px;color:#1c1c1c;transform-origin:0 0;transform:scaleX(0.9724);font-weight:bold;direction:rtl;">ג' פרקים</div>
<div class="t" style="left:663.80px;top:1004.27px;font-size:12.20px;color:#2a2a2a;transform-origin:0 0;transform:scaleX(0.9722);direction:rtl;">ג פרקים6</div>
<div class="t" style="left:721.90px;top:1019.27px;font-size:12.20px;color:#1c1c1c;transform-origin:0 0;transform:scaleX(0.9809);font-weight:bold;direction:rtl;">פרק אחד</div>
<div class="t" style="left:654.90px;top:1019.27px;font-size:12.20px;color:#2a2a2a;transform-origin:0 0;transform:scaleX(0.9743);direction:rtl;">פרק אחד6</div>
<div class="t" style="left:703.75px;top:1034.27px;font-size:12.20px;color:#1c1c1c;transform-origin:0 0;transform:scaleX(0.9994);font-weight:bold;direction:rtl;">ספר המצוות</div>
<div class="t" style="left:645.10px;top:1034.27px;font-size:12.20px;color:#2a2a2a;transform-origin:0 0;transform:scaleX(0.9792);direction:rtl;">ספהמצ6</div>
<div class="t" style="left:710.50px;top:1059.27px;font-size:12.20px;color:#1c1c1c;transform-origin:0 0;transform:scaleX(0.9494);font-weight:bold;direction:rtl;">עלות השחר</div>
<div class="t" style="left:678.25px;top:1059.27px;font-size:12.20px;color:#1c1c1c;transform-origin:0 0;transform:scaleX(0.9156);direction:rtl;">עלות6</div>
<div class="t" style="left:608.00px;top:1059.27px;font-size:12.20px;color:#1c1c1c;transform-origin:0 0;transform:scaleX(0.9260);font-weight:bold;direction:rtl;">הנץ החמה</div>
<div class="t" style="left:590.00px;top:1059.27px;font-size:12.20px;color:#1c1c1c;transform-origin:0 0;transform:scaleX(0.8060);direction:rtl;">נץ6</div>
<div class="t" style="left:511.25px;top:1059.27px;font-size:12.20px;color:#1c1c1c;transform-origin:0 0;transform:scaleX(0.9560);font-weight:bold;direction:rtl;">קריאת שמע</div>
<div class="t" style="left:471.80px;top:1059.27px;font-size:12.20px;color:#1c1c1c;transform-origin:0 0;transform:scaleX(0.9395);direction:rtl;">סוזקש6</div>
<div class="t" style="left:427.20px;top:1059.27px;font-size:12.20px;color:#1c1c1c;transform-origin:0 0;transform:scaleX(0.9926);font-weight:bold;direction:rtl;">חצות</div>
<div class="t" style="left:394.40px;top:1059.27px;font-size:12.20px;color:#1c1c1c;transform-origin:0 0;transform:scaleX(0.8862);direction:rtl;">חצות6</div>
<div class="t" style="left:342.20px;top:1059.27px;font-size:12.20px;color:#1c1c1c;transform-origin:0 0;transform:scaleX(0.9606);font-weight:bold;direction:rtl;">שקיעה</div>
<div class="t" style="left:300.70px;top:1059.27px;font-size:12.20px;color:#1c1c1c;transform-origin:0 0;transform:scaleX(0.9465);direction:rtl;">שקיעה6</div>
<div class="t" style="left:215.60px;top:1059.27px;font-size:12.20px;color:#1c1c1c;transform-origin:0 0;transform:scaleX(0.9334);font-weight:bold;direction:rtl;">צאת הכוכבים</div>
<div class="t" style="left:185.20px;top:1059.27px;font-size:12.20px;color:#1c1c1c;transform-origin:0 0;transform:scaleX(0.9349);direction:rtl;">צאת6</div>
<div class="a" style="left:164.50px;top:1127.70px;width:458.60px;height:1.40px;background:#1a1a1a;"></div>
<div class="t" style="left:640.60px;top:1119.60px;font-size:16.30px;color:#2b2b2b;transform-origin:0 0;transform:scaleX(0.9359);">Beis Moshiach</div>
<div class="t" style="left:776.90px;top:1119.60px;font-size:16.30px;color:#2b2b2b;transform-origin:0 0;transform:scaleX(0.7777);">01</div>
<svg class="a" style="left:750.8px;top:1122px" width="16.4" height="12" viewBox="0 0 16.4 12"><path d="M0 12 V3 L2.4 0 L4.8 3 V12 Z M5.8 12 V2.2 L8.2 0 L10.6 2.2 V12 Z M11.6 12 V3 L14 0 L16.4 3 V12 Z" fill="#1c1c1c"/></svg>
<svg class="a" style="left:0;top:0" width="1280" height="1212" viewBox="0 0 1280 1212"><path d="M658.90 256.95 L655.00 259.10 L658.90 261.25" stroke="#1e1e1e" stroke-width="1.00" fill="none"/><path d="M663.90 256.95 L660.00 259.10 L663.90 261.25" stroke="#1e1e1e" stroke-width="1.00" fill="none"/><path d="M711.40 256.95 L715.20 259.10 L711.40 261.25" stroke="#1e1e1e" stroke-width="1.00" fill="none"/><path d="M716.30 256.95 L720.10 259.10 L716.30 261.25" stroke="#1e1e1e" stroke-width="1.00" fill="none"/><path d="M649.80 271.95 L645.90 274.10 L649.80 276.25" stroke="#1e1e1e" stroke-width="1.00" fill="none"/><path d="M654.80 271.95 L650.90 274.10 L654.80 276.25" stroke="#1e1e1e" stroke-width="1.00" fill="none"/><path d="M708.30 271.95 L712.10 274.10 L708.30 276.25" stroke="#1e1e1e" stroke-width="1.00" fill="none"/><path d="M713.20 271.95 L717.00 274.10 L713.20 276.25" stroke="#1e1e1e" stroke-width="1.00" fill="none"/><path d="M640.00 286.95 L636.10 289.10 L640.00 291.25" stroke="#1e1e1e" stroke-width="1.00" fill="none"/><path d="M645.00 286.95 L641.10 289.10 L645.00 291.25" stroke="#1e1e1e" stroke-width="1.00" fill="none"/><path d="M690.15 286.95 L693.95 289.10 L690.15 291.25" stroke="#1e1e1e" stroke-width="1.00" fill="none"/><path d="M695.05 286.95 L698.85 289.10 L695.05 291.25" stroke="#1e1e1e" stroke-width="1.00" fill="none"/><circle cx="666.25" cy="312.75" r="1.30" fill="#1c1c1c"/><circle cx="571.75" cy="312.75" r="1.30" fill="#1c1c1c"/><circle cx="671.75" cy="328.05" r="1.30" fill="#1c1c1c"/><circle cx="571.75" cy="328.05" r="1.30" fill="#1c1c1c"/><path d="M660.55 397.15 L656.65 399.30 L660.55 401.45" stroke="#1e1e1e" stroke-width="1.00" fill="none"/><path d="M665.55 397.15 L661.65 399.30 L665.55 401.45" stroke="#1e1e1e" stroke-width="1.00" fill="none"/><path d="M711.60 397.15 L715.40 399.30 L711.60 401.45" stroke="#1e1e1e" stroke-width="1.00" fill="none"/><path d="M716.50 397.15 L720.30 399.30 L716.50 401.45" stroke="#1e1e1e" stroke-width="1.00" fill="none"/><path d="M650.55 412.15 L646.65 414.30 L650.55 416.45" stroke="#1e1e1e" stroke-width="1.00" fill="none"/><path d="M655.55 412.15 L651.65 414.30 L655.55 416.45" stroke="#1e1e1e" stroke-width="1.00" fill="none"/><path d="M708.50 412.15 L712.30 414.30 L708.50 416.45" stroke="#1e1e1e" stroke-width="1.00" fill="none"/><path d="M713.40 412.15 L717.20 414.30 L713.40 416.45" stroke="#1e1e1e" stroke-width="1.00" fill="none"/><path d="M641.20 427.15 L637.30 429.30 L641.20 431.45" stroke="#1e1e1e" stroke-width="1.00" fill="none"/><path d="M646.20 427.15 L642.30 429.30 L646.20 431.45" stroke="#1e1e1e" stroke-width="1.00" fill="none"/><path d="M690.35 427.15 L694.15 429.30 L690.35 431.45" stroke="#1e1e1e" stroke-width="1.00" fill="none"/><path d="M695.25 427.15 L699.05 429.30 L695.25 431.45" stroke="#1e1e1e" stroke-width="1.00" fill="none"/><circle cx="669.40" cy="453.75" r="1.30" fill="#1c1c1c"/><circle cx="581.20" cy="453.75" r="1.30" fill="#1c1c1c"/><circle cx="463.60" cy="453.75" r="1.30" fill="#1c1c1c"/><circle cx="386.20" cy="453.75" r="1.30" fill="#1c1c1c"/><circle cx="292.50" cy="453.75" r="1.30" fill="#1c1c1c"/><path d="M657.80 519.85 L653.90 522.00 L657.80 524.15" stroke="#1e1e1e" stroke-width="1.00" fill="none"/><path d="M662.80 519.85 L658.90 522.00 L662.80 524.15" stroke="#1e1e1e" stroke-width="1.00" fill="none"/><path d="M711.60 519.85 L715.40 522.00 L711.60 524.15" stroke="#1e1e1e" stroke-width="1.00" fill="none"/><path d="M716.50 519.85 L720.30 522.00 L716.50 524.15" stroke="#1e1e1e" stroke-width="1.00" fill="none"/><path d="M648.90 534.85 L645.00 537.00 L648.90 539.15" stroke="#1e1e1e" stroke-width="1.00" fill="none"/><path d="M653.90 534.85 L650.00 537.00 L653.90 539.15" stroke="#1e1e1e" stroke-width="1.00" fill="none"/><path d="M708.50 534.85 L712.30 537.00 L708.50 539.15" stroke="#1e1e1e" stroke-width="1.00" fill="none"/><path d="M713.40 534.85 L717.20 537.00 L713.40 539.15" stroke="#1e1e1e" stroke-width="1.00" fill="none"/><path d="M639.10 549.85 L635.20 552.00 L639.10 554.15" stroke="#1e1e1e" stroke-width="1.00" fill="none"/><path d="M644.10 549.85 L640.20 552.00 L644.10 554.15" stroke="#1e1e1e" stroke-width="1.00" fill="none"/><path d="M690.35 549.85 L694.15 552.00 L690.35 554.15" stroke="#1e1e1e" stroke-width="1.00" fill="none"/><path d="M695.25 549.85 L699.05 552.00 L695.25 554.15" stroke="#1e1e1e" stroke-width="1.00" fill="none"/><circle cx="669.40" cy="576.45" r="1.30" fill="#1c1c1c"/><circle cx="581.20" cy="576.45" r="1.30" fill="#1c1c1c"/><circle cx="463.60" cy="576.45" r="1.30" fill="#1c1c1c"/><circle cx="386.20" cy="576.45" r="1.30" fill="#1c1c1c"/><circle cx="292.50" cy="576.45" r="1.30" fill="#1c1c1c"/><path d="M657.80 642.40 L653.90 644.55 L657.80 646.70" stroke="#1e1e1e" stroke-width="1.00" fill="none"/><path d="M662.80 642.40 L658.90 644.55 L662.80 646.70" stroke="#1e1e1e" stroke-width="1.00" fill="none"/><path d="M711.60 642.40 L715.40 644.55 L711.60 646.70" stroke="#1e1e1e" stroke-width="1.00" fill="none"/><path d="M716.50 642.40 L720.30 644.55 L716.50 646.70" stroke="#1e1e1e" stroke-width="1.00" fill="none"/><path d="M648.90 657.40 L645.00 659.55 L648.90 661.70" stroke="#1e1e1e" stroke-width="1.00" fill="none"/><path d="M653.90 657.40 L650.00 659.55 L653.90 661.70" stroke="#1e1e1e" stroke-width="1.00" fill="none"/><path d="M708.50 657.40 L712.30 659.55 L708.50 661.70" stroke="#1e1e1e" stroke-width="1.00" fill="none"/><path d="M713.40 657.40 L717.20 659.55 L713.40 661.70" stroke="#1e1e1e" stroke-width="1.00" fill="none"/><path d="M639.10 672.40 L635.20 674.55 L639.10 676.70" stroke="#1e1e1e" stroke-width="1.00" fill="none"/><path d="M644.10 672.40 L640.20 674.55 L644.10 676.70" stroke="#1e1e1e" stroke-width="1.00" fill="none"/><path d="M690.35 672.40 L694.15 674.55 L690.35 676.70" stroke="#1e1e1e" stroke-width="1.00" fill="none"/><path d="M695.25 672.40 L699.05 674.55 L695.25 676.70" stroke="#1e1e1e" stroke-width="1.00" fill="none"/><circle cx="669.40" cy="699.00" r="1.30" fill="#1c1c1c"/><circle cx="581.20" cy="699.00" r="1.30" fill="#1c1c1c"/><circle cx="463.60" cy="699.00" r="1.30" fill="#1c1c1c"/><circle cx="386.20" cy="699.00" r="1.30" fill="#1c1c1c"/><circle cx="292.50" cy="699.00" r="1.30" fill="#1c1c1c"/><path d="M657.80 763.65 L653.90 765.80 L657.80 767.95" stroke="#1e1e1e" stroke-width="1.00" fill="none"/><path d="M662.80 763.65 L658.90 765.80 L662.80 767.95" stroke="#1e1e1e" stroke-width="1.00" fill="none"/><path d="M711.60 763.65 L715.40 765.80 L711.60 767.95" stroke="#1e1e1e" stroke-width="1.00" fill="none"/><path d="M716.50 763.65 L720.30 765.80 L716.50 767.95" stroke="#1e1e1e" stroke-width="1.00" fill="none"/><path d="M648.90 778.65 L645.00 780.80 L648.90 782.95" stroke="#1e1e1e" stroke-width="1.00" fill="none"/><path d="M653.90 778.65 L650.00 780.80 L653.90 782.95" stroke="#1e1e1e" stroke-width="1.00" fill="none"/><path d="M708.50 778.65 L712.30 780.80 L708.50 782.95" stroke="#1e1e1e" stroke-width="1.00" fill="none"/><path d="M713.40 778.65 L717.20 780.80 L713.40 782.95" stroke="#1e1e1e" stroke-width="1.00" fill="none"/><path d="M639.10 793.65 L635.20 795.80 L639.10 797.95" stroke="#1e1e1e" stroke-width="1.00" fill="none"/><path d="M644.10 793.65 L640.20 795.80 L644.10 797.95" stroke="#1e1e1e" stroke-width="1.00" fill="none"/><path d="M690.35 793.65 L694.15 795.80 L690.35 797.95" stroke="#1e1e1e" stroke-width="1.00" fill="none"/><path d="M695.25 793.65 L699.05 795.80 L695.25 797.95" stroke="#1e1e1e" stroke-width="1.00" fill="none"/><circle cx="669.40" cy="820.25" r="1.30" fill="#1c1c1c"/><circle cx="581.20" cy="820.25" r="1.30" fill="#1c1c1c"/><circle cx="463.60" cy="820.25" r="1.30" fill="#1c1c1c"/><circle cx="386.20" cy="820.25" r="1.30" fill="#1c1c1c"/><circle cx="292.50" cy="820.25" r="1.30" fill="#1c1c1c"/><path d="M657.80 886.60 L653.90 888.75 L657.80 890.90" stroke="#1e1e1e" stroke-width="1.00" fill="none"/><path d="M662.80 886.60 L658.90 888.75 L662.80 890.90" stroke="#1e1e1e" stroke-width="1.00" fill="none"/><path d="M711.60 886.60 L715.40 888.75 L711.60 890.90" stroke="#1e1e1e" stroke-width="1.00" fill="none"/><path d="M716.50 886.60 L720.30 888.75 L716.50 890.90" stroke="#1e1e1e" stroke-width="1.00" fill="none"/><path d="M648.90 901.60 L645.00 903.75 L648.90 905.90" stroke="#1e1e1e" stroke-width="1.00" fill="none"/><path d="M653.90 901.60 L650.00 903.75 L653.90 905.90" stroke="#1e1e1e" stroke-width="1.00" fill="none"/><path d="M708.50 901.60 L712.30 903.75 L708.50 905.90" stroke="#1e1e1e" stroke-width="1.00" fill="none"/><path d="M713.40 901.60 L717.20 903.75 L713.40 905.90" stroke="#1e1e1e" stroke-width="1.00" fill="none"/><path d="M639.10 916.60 L635.20 918.75 L639.10 920.90" stroke="#1e1e1e" stroke-width="1.00" fill="none"/><path d="M644.10 916.60 L640.20 918.75 L644.10 920.90" stroke="#1e1e1e" stroke-width="1.00" fill="none"/><path d="M690.35 916.60 L694.15 918.75 L690.35 920.90" stroke="#1e1e1e" stroke-width="1.00" fill="none"/><path d="M695.25 916.60 L699.05 918.75 L695.25 920.90" stroke="#1e1e1e" stroke-width="1.00" fill="none"/><circle cx="669.40" cy="943.20" r="1.30" fill="#1c1c1c"/><circle cx="581.20" cy="943.20" r="1.30" fill="#1c1c1c"/><circle cx="463.60" cy="943.20" r="1.30" fill="#1c1c1c"/><circle cx="386.20" cy="943.20" r="1.30" fill="#1c1c1c"/><circle cx="292.50" cy="943.20" r="1.30" fill="#1c1c1c"/><path d="M657.80 1009.25 L653.90 1011.40 L657.80 1013.55" stroke="#1e1e1e" stroke-width="1.00" fill="none"/><path d="M662.80 1009.25 L658.90 1011.40 L662.80 1013.55" stroke="#1e1e1e" stroke-width="1.00" fill="none"/><path d="M711.60 1009.25 L715.40 1011.40 L711.60 1013.55" stroke="#1e1e1e" stroke-width="1.00" fill="none"/><path d="M716.50 1009.25 L720.30 1011.40 L716.50 1013.55" stroke="#1e1e1e" stroke-width="1.00" fill="none"/><path d="M648.90 1024.25 L645.00 1026.40 L648.90 1028.55" stroke="#1e1e1e" stroke-width="1.00" fill="none"/><path d="M653.90 1024.25 L650.00 1026.40 L653.90 1028.55" stroke="#1e1e1e" stroke-width="1.00" fill="none"/><path d="M708.50 1024.25 L712.30 1026.40 L708.50 1028.55" stroke="#1e1e1e" stroke-width="1.00" fill="none"/><path d="M713.40 1024.25 L717.20 1026.40 L713.40 1028.55" stroke="#1e1e1e" stroke-width="1.00" fill="none"/><path d="M639.10 1039.25 L635.20 1041.40 L639.10 1043.55" stroke="#1e1e1e" stroke-width="1.00" fill="none"/><path d="M644.10 1039.25 L640.20 1041.40 L644.10 1043.55" stroke="#1e1e1e" stroke-width="1.00" fill="none"/><path d="M690.35 1039.25 L694.15 1041.40 L690.35 1043.55" stroke="#1e1e1e" stroke-width="1.00" fill="none"/><path d="M695.25 1039.25 L699.05 1041.40 L695.25 1043.55" stroke="#1e1e1e" stroke-width="1.00" fill="none"/><circle cx="669.40" cy="1065.85" r="1.30" fill="#1c1c1c"/><circle cx="581.20" cy="1065.85" r="1.30" fill="#1c1c1c"/><circle cx="463.60" cy="1065.85" r="1.30" fill="#1c1c1c"/><circle cx="386.20" cy="1065.85" r="1.30" fill="#1c1c1c"/><circle cx="292.50" cy="1065.85" r="1.30" fill="#1c1c1c"/></svg>
<div class="a" style="left:1207px;top:1180px;width:21px;height:11px;background:#4c4c4c"></div>
<div class="a" id="pshadow"></div>
<div class="a" id="panel"><div class="a" id="phead"></div><div class="a" style="left:0;top:0;width:297px;height:1.3px;background:#3b3b3b;z-index:2"></div><div class="a" id="ptab"></div><div class="a" style="left:0;top:0;width:1.6px;height:1165px;background:#444;z-index:2"></div><svg class="a" style="left:11px;top:13px" width="8" height="12" viewBox="0 0 8 12"><path d="M1.2 4.6 L4 1.6 L6.8 4.6 M1.2 7.4 L4 10.4 L6.8 7.4" stroke="#bdbdbd" stroke-width="1.1" fill="none"/></svg><div class="t" style="left:23.5px;top:11.8px;font-size:14px;font-weight:bold;color:#f4f4f4;letter-spacing:0.33px">Data Merge</div><svg class="a" style="left:246px;top:12px" width="46" height="16" viewBox="0 0 46 16"><path d="M1.5 2.5 L6.5 7.5 L1.5 12.5 M7.5 2.5 L12.5 7.5 L7.5 12.5" stroke="#d6d6d6" stroke-width="1.3" fill="none"/><path d="M21.5 0 V15" stroke="#8a8a8a" stroke-width="1"/><path d="M30 3.6 H44 M30 6.3 H44 M30 9 H44 M30 11.7 H44" stroke="#d0d0d0" stroke-width="1.1"/></svg><div class="t" style="left:7px;top:44.5px;font-size:13.5px;color:#f4f4f4;direction:rtl;-webkit-text-stroke:0.3px #f4f4f4">לוח זמנים.txt</div><svg class="a" style="left:263px;top:43px" width="20" height="14" viewBox="0 0 20 14"><path d="M0 6 H5 V3.6 L9 7 L5 10.4 V8 H0 Z" fill="#d8d8d8"/><path d="M7.5 1 H18.5 V13 H7.5 V10" stroke="#d8d8d8" stroke-width="1.2" fill="none"/><path d="M7.5 4 V1" stroke="#d8d8d8" stroke-width="1.2"/><rect x="10.5" y="3.2" width="2.6" height="2.6" fill="#d8d8d8"/><rect x="14.3" y="3.2" width="2.6" height="2.6" fill="#d8d8d8"/><rect x="10.5" y="8.2" width="2.6" height="2.6" fill="#d8d8d8"/><rect x="14.3" y="8.2" width="2.6" height="2.6" fill="#d8d8d8"/></svg><i class="row" style="top:65.5px"></i><span class="rT" style="top:70.1px">T</span><span class="rN" style="top:72.5px">פרשה</span><span class="rV" style="top:72.5px">01</span><i class="row" style="top:92.6px"></i><span class="rT" style="top:97.3px">T</span><span class="rN" style="top:99.7px">parsha</span><span class="rV" style="top:99.7px">01</span><i class="row" style="top:119.8px"></i><span class="rT" style="top:124.4px">T</span><span class="rN" style="top:126.8px">שבת מיוחדת</span><span class="rV" style="top:126.8px">01</span><i class="row" style="top:146.9px"></i><span class="rT" style="top:151.5px">T</span><span class="rN" style="top:153.9px">Light</span><span class="rV" style="top:153.9px">01</span><i class="row" style="top:174.0px"></i><span class="rT" style="top:178.7px">T</span><span class="rN" style="top:181.1px">End</span><span class="rV" style="top:181.1px">01</span><i class="row" style="top:201.2px"></i><span class="rT" style="top:205.8px">T</span><span class="rN" style="top:208.2px">עברי7</span><span class="rV" style="top:208.2px">01</span><i class="row" style="top:228.3px"></i><span class="rT" style="top:232.9px">T</span><span class="rN" style="top:235.3px">עברי1</span><span class="rV" style="top:235.3px">01</span><i class="row" style="top:255.4px"></i><span class="rT" style="top:260.1px">T</span><span class="rN" style="top:262.5px">עברי2</span><span class="rV" style="top:262.5px">01</span><i class="row" style="top:282.5px"></i><span class="rT" style="top:287.2px">T</span><span class="rN" style="top:289.6px">עברי3</span><span class="rV" style="top:289.6px">01</span><i class="row" style="top:309.7px"></i><span class="rT" style="top:314.3px">T</span><span class="rN" style="top:316.7px">עברי4</span><span class="rV" style="top:316.7px">01</span><i class="row" style="top:336.8px"></i><span class="rT" style="top:341.5px">T</span><span class="rN" style="top:343.9px">עברי5</span><span class="rV" style="top:343.9px">01</span><i class="row" style="top:363.9px"></i><span class="rT" style="top:368.6px">T</span><span class="rN" style="top:371.0px">עברי6</span><span class="rV" style="top:371.0px">01</span><i class="row" style="top:391.1px"></i><span class="rT" style="top:395.7px">T</span><span class="rN" style="top:398.1px">Loazi7</span><span class="rV" style="top:398.1px">01</span><i class="row" style="top:418.2px"></i><span class="rT" style="top:422.8px">T</span><span class="rN" style="top:425.2px">Loazi1</span><span class="rV" style="top:425.2px">01</span><i class="row" style="top:445.3px"></i><span class="rT" style="top:450.0px">T</span><span class="rN" style="top:452.4px">Loazi2</span><span class="rV" style="top:452.4px">01</span><i class="row" style="top:472.4px"></i><span class="rT" style="top:477.1px">T</span><span class="rN" style="top:479.5px">Loazi3</span><span class="rV" style="top:479.5px">01</span><i class="row" style="top:499.6px"></i><span class="rT" style="top:504.2px">T</span><span class="rN" style="top:506.6px">Loazi4</span><span class="rV" style="top:506.6px">01</span><i class="row" style="top:526.7px"></i><span class="rT" style="top:531.4px">T</span><span class="rN" style="top:533.8px">Loazi5</span><span class="rV" style="top:533.8px">01</span><i class="row" style="top:553.8px"></i><span class="rT" style="top:558.5px">T</span><span class="rN" style="top:560.9px">Loazi6</span><span class="rV" style="top:560.9px">01</span><i class="row" style="top:581.0px"></i><span class="rT" style="top:585.6px">T</span><span class="rN" style="top:588.0px">מיוחד7</span><span class="rV" style="top:588.0px">01</span><i class="row" style="top:608.1px"></i><span class="rT" style="top:612.8px">T</span><span class="rN" style="top:615.1px">מיוחד1</span><span class="rV" style="top:615.1px">01</span><i class="row" style="top:635.2px"></i><span class="rT" style="top:639.9px">T</span><span class="rN" style="top:642.3px">מיוחד2</span><span class="rV" style="top:642.3px">01</span><i class="row" style="top:662.4px"></i><span class="rT" style="top:667.0px">T</span><span class="rN" style="top:669.4px">מיוחד3</span><span class="rV" style="top:669.4px">01</span><i class="row" style="top:689.5px"></i><span class="rT" style="top:694.1px">T</span><span class="rN" style="top:696.5px">מיוחד4</span><span class="rV" style="top:696.5px">01</span><i class="row" style="top:716.6px"></i><span class="rT" style="top:721.3px">T</span><span class="rN" style="top:723.7px">מיוחד5</span><span class="rV" style="top:723.7px">01</span><i class="row" style="top:743.8px"></i><span class="rT" style="top:748.4px">T</span><span class="rN" style="top:750.8px">מיוחד6</span><span class="rV" style="top:750.8px">01</span><i class="row" style="top:770.9px"></i><span class="rT" style="top:775.5px">T</span><span class="rN" style="top:777.9px">Chag7</span><i class="row" style="top:798.0px"></i><span class="rT" style="top:802.7px">T</span><span class="rN" style="top:805.1px">Chag1</span><span class="rV" style="top:805.1px">01</span><i class="row" style="top:825.1px"></i><span class="rT" style="top:829.8px">T</span><span class="rN" style="top:832.2px">Chag2</span><span class="rV" style="top:832.2px">01</span><i class="row" style="top:852.3px"></i><span class="rT" style="top:856.9px">T</span><span class="rN" style="top:859.3px">Chag3</span><span class="rV" style="top:859.3px">01</span><i class="row" style="top:879.4px"></i><span class="rT" style="top:884.0px">T</span><span class="rN" style="top:886.4px">Chag4</span><span class="rV" style="top:886.4px">01</span><i class="row" style="top:906.5px"></i><span class="rT" style="top:911.2px">T</span><span class="rN" style="top:913.6px">Chag5</span><span class="rV" style="top:913.6px">01</span><i class="row" style="top:933.7px"></i><span class="rT" style="top:938.3px">T</span><span class="rN" style="top:940.7px">Chag6</span><span class="rV" style="top:940.7px">01</span><i class="row" style="top:960.8px"></i><span class="rT" style="top:965.4px">T</span><span class="rN" style="top:967.8px">עלות7</span><span class="rV" style="top:967.8px">01</span><i class="row" style="top:987.9px"></i><span class="rT" style="top:992.6px">T</span><span class="rN" style="top:995.0px">עלות1</span><span class="rV" style="top:995.0px">01</span><i class="row" style="top:1015.0px"></i><span class="rT" style="top:1019.7px">T</span><span class="rN" style="top:1022.1px">עלות2</span><span class="rV" style="top:1022.1px">01</span><i class="row" style="top:1042.2px"></i><span class="rT" style="top:1046.8px">T</span><span class="rN" style="top:1049.2px">עלות3</span><span class="rV" style="top:1049.2px">01</span><i class="row" style="top:1069.3px"></i><span class="rT" style="top:1074.0px">T</span><span class="rN" style="top:1076.4px">עלות4</span><span class="rV" style="top:1076.4px">01</span><i class="row" style="top:1096.4px"></i><span class="rT" style="top:1101.1px">T</span><span class="rN" style="top:1103.5px">עלות5</span><span class="rV" style="top:1103.5px">01</span><div class="a" style="left:281px;top:67px;width:16px;height:1056.6px;background:#575757"></div><div class="a" style="left:283px;top:68px;width:11px;height:428px;border-radius:5.5px;background:#6b6b6b"></div><div class="a" style="left:0;top:1123.6px;width:297px;height:32.5px;background:#585858"></div><div class="a" style="left:0;top:1123.6px;width:297px;height:1px;background:#626262"></div><div class="a" style="left:8.5px;top:1132px;width:14.5px;height:14.5px;border:1.2px solid #cfcfcf;border-radius:2px;background:#4f4f4f"></div><div class="t" style="left:30.5px;top:1132.8px;font-size:13px;color:#f4f4f4;-webkit-text-stroke:0.35px #f4f4f4;letter-spacing:0.2px">Preview</div><div class="a" style="left:187.5px;top:1124.5px;width:30px;height:29.5px;background:#5e5e5e"></div><div class="t" style="left:192.5px;top:1132px;font-size:13px;color:#8e8e8e">1</div><svg class="a" style="left:136px;top:1133px" width="136" height="13" viewBox="0 0 136 13"><g fill="#8c8c8c"><rect x="2.5" y="1.5" width="1.8" height="10"/><path d="M12.5 1.5 L5.5 6.5 L12.5 11.5 Z"/><path d="M40.5 1.5 L33.8 6.5 L40.5 11.5 Z"/><path d="M94 1.5 L100.6 6.5 L94 11.5 Z"/><path d="M121 1.5 L128 6.5 L121 11.5 Z"/><rect x="129.2" y="1.5" width="1.8" height="10"/></g></svg><div class="a" style="left:0;top:1155px;width:297px;height:2px;background:#383838"></div><div class="a" style="left:0;top:1157px;width:297px;height:8px;background:#4b4b4b"></div><div class="a" style="left:137px;top:1156.5px;width:23px;height:5px;background:repeating-linear-gradient(90deg,#343434 0,#343434 1.2px,transparent 1.2px,transparent 2.6px)"></div></div>
<div class="a" style="left:1227px;top:14px;width:53px;height:1198px;background:#535353"></div>
<div class="a" style="left:1227px;top:14px;width:2px;height:1198px;background:#3c3c3c"></div>
<div class="a" style="left:1275px;top:14px;width:1.8px;height:1198px;background:#404040"></div>
<svg class="a" style="left:1259px;top:4px" width="10" height="8" viewBox="0 0 10 8"><path d="M3.6 1.4 L1 4 L3.6 6.6 M8.2 1.4 L5.6 4 L8.2 6.6" stroke="#bdbdbd" stroke-width="1" fill="none"/></svg>
<div class="a" style="left:1229px;top:64.0px;width:46.5px;height:1.8px;background:#3d3d3d"></div><div class="a" style="left:1229px;top:114.7px;width:46.5px;height:1.8px;background:#3d3d3d"></div><div class="a" style="left:1229px;top:164.9px;width:46.5px;height:1.8px;background:#3d3d3d"></div><div class="a" style="left:1229px;top:215.7px;width:46.5px;height:1.8px;background:#3d3d3d"></div><div class="a" style="left:1229px;top:266.4px;width:46.5px;height:1.8px;background:#3d3d3d"></div><div class="a" style="left:1229px;top:316.1px;width:46.5px;height:1.8px;background:#3d3d3d"></div><div class="a" style="left:1229px;top:401.7px;width:46.5px;height:1.8px;background:#3d3d3d"></div><div class="a" style="left:1229px;top:478.3px;width:46.5px;height:1.8px;background:#3d3d3d"></div><div class="a" style="left:1229px;top:537.7px;width:46.5px;height:1.8px;background:#3d3d3d"></div><div class="a" style="left:1229px;top:622.1px;width:46.5px;height:1.8px;background:#3d3d3d"></div><div class="a" style="left:1229px;top:707.1px;width:46.5px;height:1.8px;background:#3d3d3d"></div><div class="a" style="left:1229px;top:826.8px;width:46.5px;height:1.8px;background:#3d3d3d"></div><div class="a" style="left:1229px;top:912.6px;width:46.5px;height:1.8px;background:#3d3d3d"></div><div class="a" style="left:1229px;top:997.6px;width:46.5px;height:1.8px;background:#3d3d3d"></div><div class="a" style="left:1240.3px;top:17.1px;width:24.4px;height:7.4px;background:repeating-linear-gradient(90deg,#3b3b3b 0,#3b3b3b 1.25px,transparent 1.25px,transparent 2.58px)"></div><div class="a" style="left:1240.3px;top:67.9px;width:24.4px;height:7.4px;background:repeating-linear-gradient(90deg,#3b3b3b 0,#3b3b3b 1.25px,transparent 1.25px,transparent 2.58px)"></div><div class="a" style="left:1240.3px;top:118.6px;width:24.4px;height:7.4px;background:repeating-linear-gradient(90deg,#3b3b3b 0,#3b3b3b 1.25px,transparent 1.25px,transparent 2.58px)"></div><div class="a" style="left:1240.3px;top:169.4px;width:24.4px;height:7.4px;background:repeating-linear-gradient(90deg,#3b3b3b 0,#3b3b3b 1.25px,transparent 1.25px,transparent 2.58px)"></div><div class="a" style="left:1240.3px;top:220.1px;width:24.4px;height:7.4px;background:repeating-linear-gradient(90deg,#3b3b3b 0,#3b3b3b 1.25px,transparent 1.25px,transparent 2.58px)"></div><div class="a" style="left:1240.3px;top:270.4px;width:24.4px;height:7.4px;background:repeating-linear-gradient(90deg,#3b3b3b 0,#3b3b3b 1.25px,transparent 1.25px,transparent 2.58px)"></div><div class="a" style="left:1240.3px;top:320.6px;width:24.4px;height:7.4px;background:repeating-linear-gradient(90deg,#3b3b3b 0,#3b3b3b 1.25px,transparent 1.25px,transparent 2.58px)"></div><div class="a" style="left:1240.3px;top:406.1px;width:24.4px;height:7.4px;background:repeating-linear-gradient(90deg,#3b3b3b 0,#3b3b3b 1.25px,transparent 1.25px,transparent 2.58px)"></div><div class="a" style="left:1240.3px;top:482.4px;width:24.4px;height:7.4px;background:repeating-linear-gradient(90deg,#3b3b3b 0,#3b3b3b 1.25px,transparent 1.25px,transparent 2.58px)"></div><div class="a" style="left:1240.3px;top:541.8px;width:24.4px;height:7.4px;background:repeating-linear-gradient(90deg,#3b3b3b 0,#3b3b3b 1.25px,transparent 1.25px,transparent 2.58px)"></div><div class="a" style="left:1240.3px;top:626.8px;width:24.4px;height:7.4px;background:repeating-linear-gradient(90deg,#3b3b3b 0,#3b3b3b 1.25px,transparent 1.25px,transparent 2.58px)"></div><div class="a" style="left:1240.3px;top:711.6px;width:24.4px;height:7.4px;background:repeating-linear-gradient(90deg,#3b3b3b 0,#3b3b3b 1.25px,transparent 1.25px,transparent 2.58px)"></div><div class="a" style="left:1240.3px;top:831.4px;width:24.4px;height:7.4px;background:repeating-linear-gradient(90deg,#3b3b3b 0,#3b3b3b 1.25px,transparent 1.25px,transparent 2.58px)"></div><div class="a" style="left:1240.3px;top:916.9px;width:24.4px;height:7.4px;background:repeating-linear-gradient(90deg,#3b3b3b 0,#3b3b3b 1.25px,transparent 1.25px,transparent 2.58px)"></div>
<div class="a" style="left:1236px;top:30.2px;width:33px;height:26.8px;border-radius:2.5px;background:#2d2d2d"></div>
<svg class="a" style="left:1237.5px;top:28.6px" width="30" height="30" viewBox="0 0 30 30"><g fill="#d2d2d2"><path d="M1.6 9.3 H6.6 V5.6 L12 11 L6.6 16.4 V12.7 H1.6 Z"/><path d="M9.4 3.2 H18.2 L23.4 8.4 V15.6 L18.2 16.6 L16.4 22 H9.4 L14.6 12.6 Z"/></g><path d="M18 3.4 V8.6 H23.2" stroke="#2d2d2d" stroke-width="1.3" fill="none"/><path d="M14.6 12.6 L19.4 10.2 M14.6 12.6 L17.4 17.4" stroke="#2d2d2d" stroke-width="0.9" fill="none"/><circle cx="22.8" cy="21.6" r="4.4" fill="#2d2d2d"/><circle cx="22.8" cy="21.6" r="3.6" fill="none" stroke="#d2d2d2" stroke-width="2.6"/><g stroke="#d2d2d2" stroke-width="2.5"><path d="M22.8 15 V17.4 M22.8 25.8 V28.2 M16.2 21.6 H18.6 M27 21.6 H29.4 M18.1 16.9 L19.8 18.6 M25.8 24.6 L27.5 26.3 M27.5 16.9 L25.8 18.6 M19.8 24.6 L18.1 26.3"/></g></svg>
<svg class="a" style="left:1237.5px;top:81.0px" width="30" height="30" viewBox="0 0 30 30"><path d="M5.8 3.2 H25.4 Q27.4 3.2 27.4 5.2 V18.2 Q27.4 20.2 25.4 20.2 H17.6 L11.2 27 V20.2 H5.8 Q3.8 20.2 3.8 18.2 V5.2 Q3.8 3.2 5.8 3.2 Z" fill="#d2d2d2"/><path d="M8.4 9 H23.6 M8.4 14.4 H20.6" stroke="#484848" stroke-width="2"/></svg>
<svg class="a" style="left:1237.5px;top:129.8px" width="30" height="30" viewBox="0 0 30 30"><g fill="none" stroke="#d2d2d2" stroke-width="2.3"><rect x="4.4" y="10.4" width="13.2" height="9.2" rx="4.6"/><rect x="12.4" y="10.4" width="13.2" height="9.2" rx="4.6"/></g><path d="M10.6 19.6 H13.4 M16.6 10.4 H19.4" stroke="#535353" stroke-width="3"/></svg>
<div class="t" style="left:1245.6px;top:184.2px;font-family:'Liberation Serif',serif;font-style:italic;font-size:23.5px;color:#d2d2d2">A</div>
<svg class="a" style="left:1237.5px;top:181.0px" width="30" height="30" viewBox="0 0 30 30"><path d="M7.2 9.6 Q6.4 6.2 10 6 Q13.2 6 14.4 8.2 M8.6 22.8 Q6.4 23.6 6 21.6 M20.4 23 Q23 23.4 24 21.6" fill="none" stroke="#d2d2d2" stroke-width="1.4"/></svg>
<svg class="a" style="left:1237.5px;top:231.6px" width="30" height="30" viewBox="0 0 30 30"><g transform="translate(15.4 15) scale(0.86) translate(-15 -15)"><path d="M13.5 4 Q18 1.8 22.5 4.6 Q24.4 6.8 22.4 8.8 Q19.8 9.8 18.4 8.2 L17.2 10.4 Q23.8 13.6 23.6 18.8 Q23 24.2 16.6 25.4 L13.8 24 Q11.8 26.2 8.6 25 Q5.6 23.2 7.2 20.4 Q9.4 18.4 11.6 20.2 L13 17.6 Q8.2 14.4 9 9.6 Q10 5.6 13.5 4 Z" fill="#d2d2d2"/><path d="M12.4 10.2 Q16.2 15 19 21.4" stroke="#535353" stroke-width="1.3" fill="none"/><path d="M18.6 8.4 Q17 6.6 18.6 5.4" stroke="#535353" stroke-width="1" fill="none"/></g></svg>
<svg class="a" style="left:1237.5px;top:282.0px" width="30" height="30" viewBox="0 0 30 30"><path d="M6.4 4.6 H15.8 L20.6 9.4 V20.4 H6.4 Z" fill="#d2d2d2"/><path d="M15.6 4.8 V9.6 H20.4" stroke="#535353" stroke-width="1.2" fill="none"/><path d="M8.8 10 L10.5 11.7 L13.6 8.2 M8.8 15.2 L10.5 16.9 L13.6 13.4" stroke="#535353" stroke-width="1.5" fill="none"/><path d="M24 13.6 L26.6 16.2 L18.6 24.2 L14.6 25.6 L16 21.6 Z" fill="#d2d2d2" stroke="#535353" stroke-width="1"/><path d="M16.6 21.8 L18.4 23.6" stroke="#535353" stroke-width="0.8"/></svg>
<svg class="a" style="left:1237.5px;top:332.0px" width="30" height="30" viewBox="0 0 30 30"><g fill="#d2d2d2"><rect x="4.2" y="7.5" width="21.6" height="1.1"/><rect x="4.2" y="12.6" width="21.6" height="2.5"/><rect x="4.2" y="18.6" width="21.6" height="4.2"/></g></svg>
<svg class="a" style="left:1237.5px;top:367.0px" width="30" height="30" viewBox="0 0 30 30"><g stroke="#d2d2d2" stroke-width="1.2"><path d="M4.2 7 H25.8 M4.2 11.2 H9.3 M20.7 11.2 H25.8 M4.2 15 H8.7 M21.3 15 H25.8 M4.2 18.8 H9.3 M20.7 18.8 H25.8 M4.2 23 H25.8"/></g><circle cx="15.2" cy="15" r="5.2" fill="#d2d2d2"/></svg>
<svg class="a" style="left:1237.5px;top:417.7px" width="30" height="30" viewBox="0 0 30 30"><g fill="#d2d2d2"><rect x="5.9" y="3.9" width="1.3" height="22.2"/><rect x="9.4" y="7.3" width="9.1" height="6.6"/><rect x="9.4" y="17" width="15.8" height="6.5"/></g></svg>
<svg class="a" style="left:1237.5px;top:452.2px" width="30" height="30" viewBox="0 0 30 30"><g fill="#d2d2d2"><path d="M6.3 5.8 H17.5 V11.5 H12.5 V17 H6.3 Z"/><path d="M18.8 11.5 H25.7 V24.2 H12.5 V18.3 H18.8 Z"/><rect x="14" y="13" width="3.3" height="3.8"/></g></svg>
<div class="a" style="left:1242.7px;top:509.7px;width:21.4px;height:14.5px;border:1.2px solid #d8d8d8;background:linear-gradient(90deg,#3a3a3a,#e4e4e4)"></div>
<div class="t" style="left:1243.6px;top:557.6px;font-size:21px;color:#d2d2d2;-webkit-text-stroke:0.5px #d2d2d2">A</div>
<div class="a" style="left:1261.7px;top:556px;width:1.3px;height:23px;background:#d2d2d2"></div>
<svg class="a" style="left:1237.5px;top:589.0px" width="30" height="30" viewBox="0 0 30 30"><path d="M16.2 6.4 H12.5 Q7.5 6.4 7.5 11.2 Q7.5 16 12.5 16 H16.2 Z" fill="#d2d2d2"/><path d="M17 6.4 V23.6 M20.6 6.4 V23.6 M15 6.9 H22" stroke="#d2d2d2" stroke-width="1.5" fill="none"/></svg>
<svg class="a" style="left:1237.5px;top:638.4px" width="30" height="30" viewBox="0 0 30 30"><rect x="6.3" y="4.6" width="18.9" height="20.8" fill="#d2d2d2"/><path d="M9.8 8.4 H16.2 M13 8.4 V13.6 M11.5 13.6 H14.5 M17.5 12.2 H21.8 M9.8 16.6 H21.8 M9.8 19.4 H21.8 M9.8 22.2 H21.8" stroke="#4a4a4a" stroke-width="1.2" fill="none"/></svg>
<svg class="a" style="left:1237.5px;top:672.0px" width="30" height="30" viewBox="0 0 30 30"><g fill="none" stroke="#d2d2d2" stroke-width="1.5"><path d="M7 15.5 Q6 21.5 11 21.6 Q15.5 21.5 15.6 16.5 V14.8 Q15.7 18.6 18.3 18.6 Q20.6 18.6 20.6 15.2 Q20.8 18.6 23.2 18.6 Q25.6 18.4 25.2 14.2"/><path d="M14.4 9.8 Q12.6 9.8 12.6 8.2 Q12.7 6.5 14.4 6.6 Q16 6.8 15.8 9 Q15.6 11 13 11.6"/></g><path d="M6.3 4.2 L9.6 6.9 L6.3 9.6 Z M21 25.5 L23.6 22.5 L26.2 25.5 Z" fill="#d2d2d2"/></svg>
<svg class="a" style="left:1237.5px;top:722.4px" width="30" height="30" viewBox="0 0 30 30"><g fill="none" stroke="#d2d2d2" stroke-width="1.3"><rect x="6.4" y="6.4" width="18.2" height="17.2"/><path d="M6.4 10.8 H24.6 M6.4 15 H24.6 M6.4 19.3 H24.6 M11.6 10.8 V23.6"/></g><rect x="6.4" y="6.4" width="18.2" height="3.2" fill="#d2d2d2"/></svg>
<svg class="a" style="left:1237.5px;top:758.5px" width="30" height="30" viewBox="0 0 30 30"><g fill="none" stroke="#d2d2d2" stroke-width="1.3"><rect x="9.6" y="4.6" width="16" height="15"/><path d="M9.6 9 H25.6 M14.6 12.8 H25.6 M14.6 16.3 H25.6"/></g><rect x="9.6" y="4.6" width="16" height="3" fill="#d2d2d2"/><rect x="6.8" y="14.2" width="8.3" height="8.3" fill="#535353" stroke="#d2d2d2" stroke-width="1.3"/><rect x="10" y="17.6" width="7.6" height="7.6" fill="#535353" stroke="#d2d2d2" stroke-width="1.3"/></svg>
<svg class="a" style="left:1237.5px;top:793.2px" width="30" height="30" viewBox="0 0 30 30"><g fill="none" stroke="#d2d2d2" stroke-width="1.4"><rect x="9.6" y="5" width="16" height="14"/></g><rect x="9.6" y="5" width="16" height="3.2" fill="#d2d2d2"/><rect x="6.8" y="13.2" width="8.3" height="8.3" fill="#535353" stroke="#d2d2d2" stroke-width="1.3"/><rect x="10" y="16.6" width="7.6" height="7.6" fill="#535353" stroke="#d2d2d2" stroke-width="1.3"/></svg>
<div class="t" style="left:1244.6px;top:843.4px;font-size:26px;font-style:italic;color:#d2d2d2;transform:scaleX(.8);transform-origin:0 0">f</div>
<div class="t" style="left:1251.4px;top:848.6px;font-size:22px;font-style:italic;color:#d2d2d2;transform:scaleX(.92);transform-origin:0 0">x</div>
<svg class="a" style="left:1237.5px;top:878.0px" width="30" height="30" viewBox="0 0 30 30"><g fill="none" stroke="#d2d2d2" stroke-width="1.3"><path d="M9.5 22.4 H7 V7.7 H22.4 V9.2"/><rect x="10" y="9.8" width="14.7" height="14.7" rx="1.2"/></g><path d="M17.2 9.8 H21.4 V16.6 L19.3 14.8 L17.2 16.6 Z" fill="#d2d2d2"/></svg>
<div class="t" style="left:1241.8px;top:934.2px;font-size:13.5px;color:#d2d2d2;letter-spacing:-0.1px;-webkit-text-stroke:0.3px #d2d2d2">abc</div>
<svg class="a" style="left:1237.5px;top:932.0px" width="30" height="30" viewBox="0 0 30 30"><path d="M4 14.6 H14 M22 14.6 H26.5" stroke="#d2d2d2" stroke-width="1.2"/><path d="M14.8 9.6 L24.6 17.8 L19.8 18.4 L16.4 23.6 Z" fill="#d2d2d2" stroke="#535353" stroke-width="0.8"/></svg>
<svg class="a" style="left:1237.5px;top:963.5px" width="30" height="30" viewBox="0 0 30 30"><circle cx="13.6" cy="13.6" r="8.6" fill="#d2d2d2"/><path d="M9.5 7 Q13 9 11 12.5 Q8 14 7 18 M15.5 5.6 Q14.5 8 17 9 Q18.5 7.5 20.5 8.5" stroke="#535353" stroke-width="1.5" fill="none"/><path d="M16 12 Q17.4 11.4 17.9 12.8 L19.4 17 Q20.6 16 21.5 17.2 Q22.6 16.6 23.4 17.8 Q24.8 17.6 25.2 19 L26 23 Q26.2 25.8 23.4 26.4 L20.4 26.8 Q18.6 26.8 17.4 24.8 L14.6 20.4 Q14.4 19 15.8 19.2 L17 20.2 L15.2 13.6 Q15 12.4 16 12 Z" fill="#d2d2d2" stroke="#535353" stroke-width="0.9"/></svg>
</div>
</body></html>
